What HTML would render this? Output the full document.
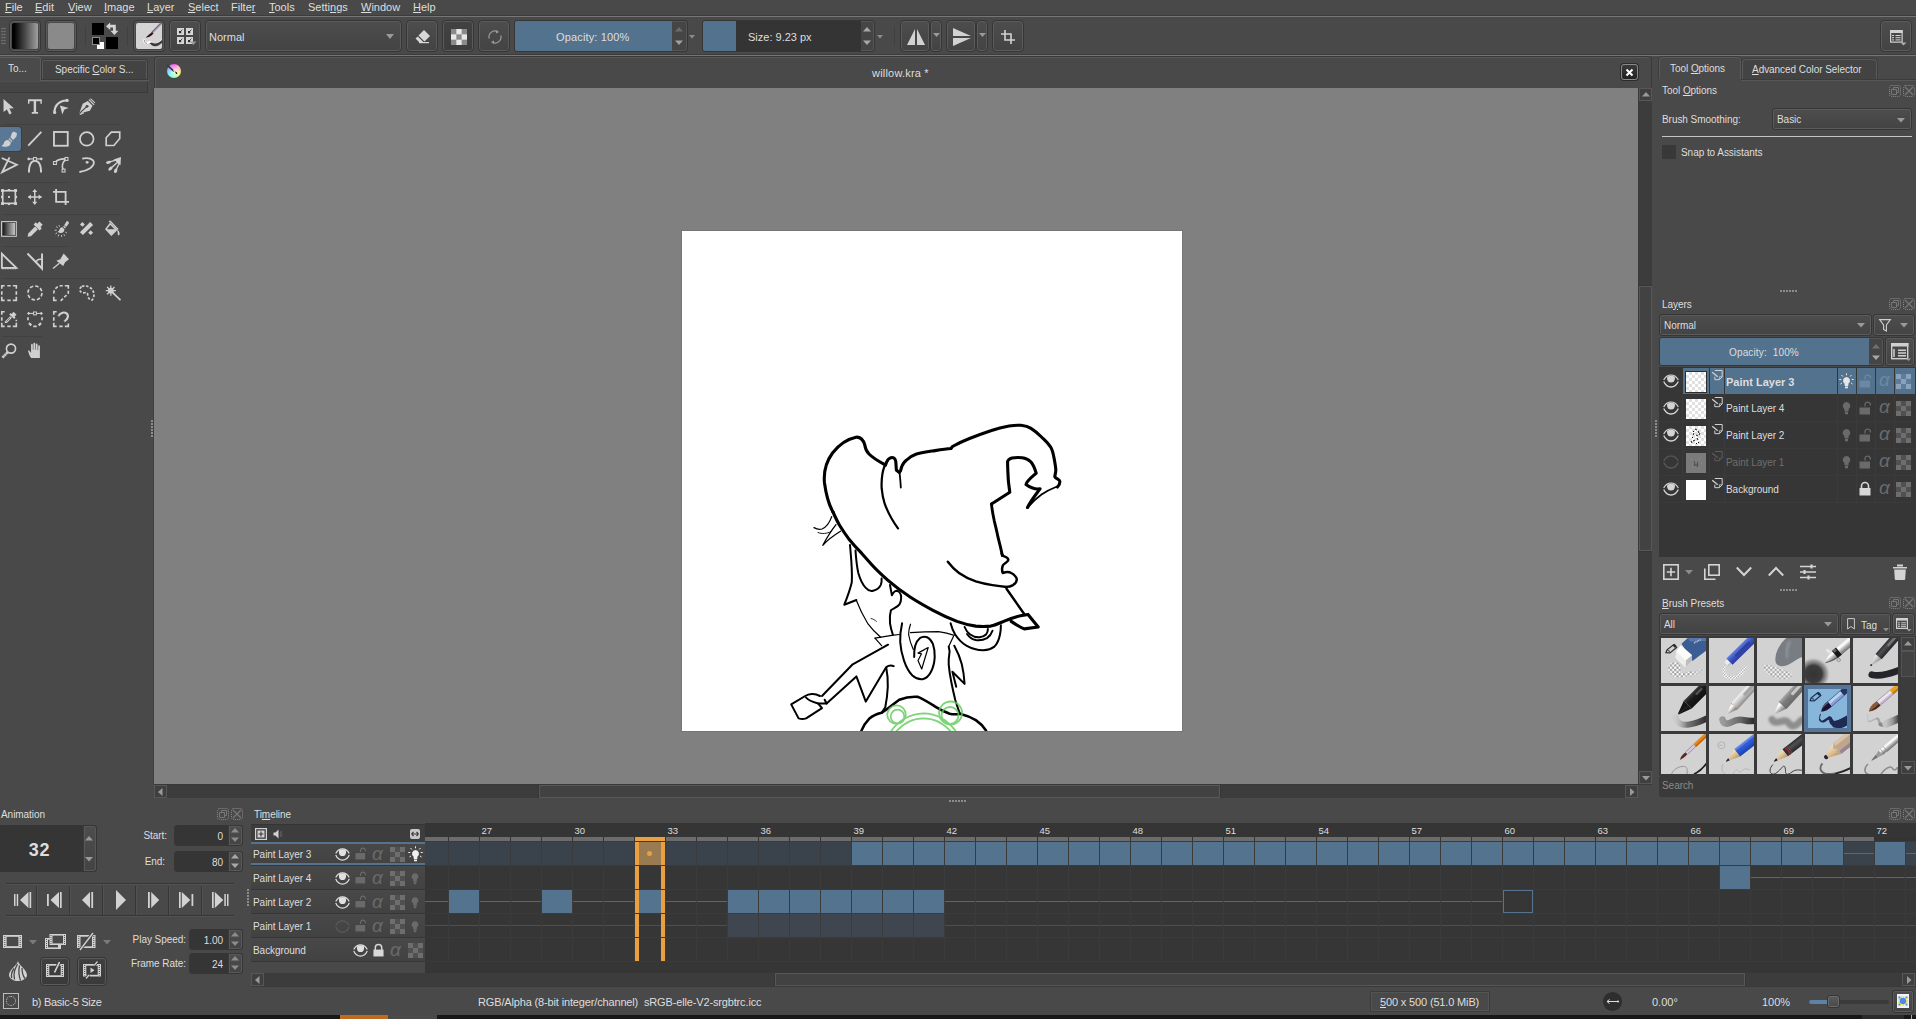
<!DOCTYPE html>
<html lang="en">
<head>
<meta charset="utf-8">
<title>willow.kra - Krita</title>
<style>
*{box-sizing:border-box;margin:0;padding:0}
html,body{width:1916px;height:1019px;overflow:hidden;background:#494949}
body{position:relative;font-family:"Liberation Sans","DejaVu Sans",sans-serif;font-size:11px;color:#dedede;line-height:1}
.a{position:absolute}
.t{position:absolute;white-space:nowrap;line-height:14px;height:14px;color:#dedede}
.btn{position:absolute;border:1px solid #363636;border-radius:4px;background:linear-gradient(#4d4d4d,#434343);box-shadow:inset 0 0 0 1px #5b5b5b}
.inp{position:absolute;border:1px solid #363636;border-radius:3px;background:#353535}
.d{font-size:10px;letter-spacing:-0.050px;margin-top:-0.500px}
.hl{background:#53728e}
.trough{position:absolute;background:#3b3b3b}
.sbtn{position:absolute;border:1px solid #575757;background:#3f3f3f}
svg{position:absolute;overflow:visible}
u{text-decoration:underline;text-underline-offset:1px}
</style>
</head>
<body>
<!-- MENU BAR -->
<div class="a" id="menubar" style="left:0;top:0;width:1916px;height:16px;background:#494949"></div>
<div class="t" style="left:5px;top:0"><u>F</u>ile</div>
<div class="t" style="left:35px;top:0"><u>E</u>dit</div>
<div class="t" style="left:68px;top:0"><u>V</u>iew</div>
<div class="t" style="left:104px;top:0"><u>I</u>mage</div>
<div class="t" style="left:147px;top:0"><u>L</u>ayer</div>
<div class="t" style="left:188px;top:0"><u>S</u>elect</div>
<div class="t" style="left:231px;top:0">Filte<u>r</u></div>
<div class="t" style="left:269px;top:0"><u>T</u>ools</div>
<div class="t" style="left:308px;top:0">Setti<u>n</u>gs</div>
<div class="t" style="left:361px;top:0"><u>W</u>indow</div>
<div class="t" style="left:413px;top:0"><u>H</u>elp</div>
<div class="a" style="left:0;top:15px;width:1916px;height:1px;background:#3c3c3c"></div>
<div class="a" style="left:0;top:16px;width:1916px;height:1px;background:#767676"></div>
<!-- TOOLBAR -->
<div class="a" style="left:0;top:54px;width:1916px;height:1px;background:#3c3c3c"></div>
<div class="a" style="left:0;top:55px;width:1916px;height:1px;background:#767676"></div>
<!-- grip -->
<div class="a" style="left:1px;top:27px;width:5px;height:18px;background-image:radial-gradient(circle,#6a6a6a 0.9px,transparent 1.1px);background-size:2.5px 3px"></div>
<div class="btn" style="left:9px;top:20px;width:32px;height:32px"><div class="a" style="left:2px;top:2px;width:26px;height:26px;border-radius:2px;background:linear-gradient(90deg,#000 8%,#a0a0a0 100%)"></div></div>
<div class="btn" style="left:45px;top:20px;width:32px;height:32px"><div class="a" style="left:2px;top:2px;width:26px;height:26px;border-radius:2px;background:#8a8a8a"></div></div>
<div class="a" style="left:85px;top:26px;width:1px;height:20px;background:#404040"></div>
<!-- fg/bg colors -->
<div class="a" style="left:106px;top:37px;width:12px;height:12px;background:#000"></div>
<div class="a" style="left:92px;top:23px;width:12px;height:12px;background:#000"></div>
<div class="a" style="left:97px;top:42px;width:7px;height:7px;background:#fff"></div>
<div class="a" style="left:92px;top:37px;width:8px;height:8px;background:#000;border:1px solid #8a8a8a"></div>
<svg style="left:106px;top:22px" width="13" height="14" viewBox="0 0 13 14"><path d="M0 4.200L4.200 0.500V2.800H9.800V8.800H12.400L8.400 13L4.400 8.800H7V5.600H4.200V7.900Z" fill="#d4d4d4"/></svg>
<div class="a" style="left:127px;top:26px;width:1px;height:20px;background:#404040"></div>
<!-- brush preset btn -->
<div class="btn" style="left:133px;top:20px;width:32px;height:32px"><div class="a" style="left:2px;top:2px;width:26px;height:26px;border-radius:2px;background:#d4d4d4"></div>
<svg style="left:2px;top:2px;overflow:hidden" width="26" height="26" viewBox="0 0 26 26"><path d="M25 0.500L15.800 10" stroke="#9a8aa6" stroke-width="1.800"/><path d="M24.400 0.200L15.400 9.600" stroke="#5a5058" stroke-width="0.700"/><path d="M16.300 9.300C14 10.500 12 12.500 9.700 14.600C12.500 14.800 15 13.500 17.500 10.600Z" fill="#3a1010"/><path d="M8.500 16.500C8 19 9 20.500 11 20S13.500 18.300 15 19.500S17.500 22 20.500 21.500S24.500 19.500 26.500 17" fill="none" stroke="#fff" stroke-width="2.200"/><path d="M13.500 20.500C15 21 15.500 23 18.500 23.300S23.500 22 27 19.300V16C24 19 21.500 20.500 19 20.500S16 18.500 13.500 20.500Z" fill="#3c3c3c"/><path d="M8.600 17C8.300 19.500 9.500 20.800 11 20.300" fill="none" stroke="#666" stroke-width="0.700"/></svg></div>
<div class="btn" style="left:169px;top:20px;width:32px;height:32px">
<svg style="left:7px;top:7px" width="20" height="18" viewBox="0 0 20 18"><g fill="#d6d6d6"><rect x="0" y="0" width="7" height="7"/><rect x="9" y="0" width="7" height="7"/><rect x="0" y="9" width="7" height="7"/><rect x="9" y="9" width="7" height="7"/></g><path d="M13 13.500h6.500l-3.200 3.500z" fill="#9a9a9a"/><g fill="#2c2c2c"><rect x="2" y="3" width="2.200" height="2.200"/><rect x="11" y="3" width="2.200" height="2.200"/><rect x="2" y="12" width="2.200" height="2.200"/><rect x="11" y="12" width="2.200" height="2.200"/></g><g stroke="#2c2c2c" stroke-width="0.800"><path d="M3.500 3.500l2-2M12.500 3.500l2-2M3.500 12.500l2-2M12.500 12.500l2-2"/></g></svg></div>
<!-- blend combo -->
<div class="btn" style="left:205px;top:20px;width:197px;height:32px"></div>
<div class="t" style="left:209px;top:30px">Normal</div>
<svg style="left:386px;top:34px" width="8" height="5"><path d="M0 0h8l-4 5z" fill="#9a9a9a"/></svg>
<!-- eraser -->
<div class="btn" style="left:406px;top:20px;width:32px;height:32px">
<svg style="left:8px;top:9px" width="16" height="14" viewBox="0 0 16 14"><path d="M9 0l6 6-5.5 5.5-6-6z" fill="#d8d8d8"/><path d="M2.8 6.4l6 6H4.5L0.5 8.6z" fill="#d8d8d8"/><path d="M4 12.6h10" stroke="#d8d8d8" stroke-width="1.2"/></svg></div>
<div class="btn" style="left:442px;top:20px;width:32px;height:32px;background:linear-gradient(#424242,#3c3c3c)">
<svg style="left:8px;top:8px" width="16" height="16" viewBox="0 0 15 15"><rect width="15" height="15" fill="#8a8a8a"/><g fill="#e8e8e8"><rect x="5" y="0" width="5" height="5"/><rect x="0" y="5" width="5" height="5"/><rect x="10" y="5" width="5" height="5"/><rect x="5" y="10" width="5" height="5"/></g></svg></div>
<div class="btn" style="left:478px;top:20px;width:32px;height:32px">
<svg style="left:9px;top:9px" width="14" height="14" viewBox="0 0 14 14"><path d="M1.2 8.5A6 6 0 0 1 9.5 1.5M12.8 5.5A6 6 0 0 1 4.5 12.5" stroke="#9c9c9c" stroke-width="1.2" fill="none"/><path d="M8 0l3 2-3 1.500zM6 14l-3-2 3-1.500z" fill="#9c9c9c"/></svg></div>
<!-- opacity slider -->
<div class="a" style="left:514px;top:20px;width:174px;height:32px;border:1px solid #363636;border-radius:3px;background:#454545;box-shadow:inset 0 0 0 1px #565656"></div>
<div class="a hl" style="left:515px;top:21px;width:157px;height:30px;border-radius:2px 0 0 2px"></div>
<div class="t" style="left:556px;top:30px;letter-spacing:0.150px">Opacity: 100%</div>
<svg style="left:675px;top:27px" width="8" height="18"><path d="M0 4.500h8l-4-4.500z" fill="#6c6c6c"/><path d="M0 13.500h8l-4 4.500z" fill="#a0a0a0"/></svg>
<svg style="left:689px;top:35px" width="6" height="4"><path d="M0 0h6l-3 3.500z" fill="#8c8c8c"/></svg>
<!-- size slider -->
<div class="a" style="left:702px;top:20px;width:173px;height:32px;border:1px solid #363636;border-radius:3px;background:#454545;box-shadow:inset 0 0 0 1px #565656"></div>
<div class="a" style="left:703px;top:21px;width:158px;height:30px;background:#343434;border-radius:2px 0 0 2px"></div>
<div class="a hl" style="left:703px;top:21px;width:33px;height:30px;border-radius:2px 0 0 2px"></div>
<div class="t" style="left:748px;top:30px">Size: 9.23 px</div>
<svg style="left:863px;top:27px" width="8" height="18"><path d="M0 4.500h8l-4-4.500zM0 13.500h8l-4 4.500z" fill="#a8a8a8"/></svg>
<svg style="left:877px;top:35px" width="6" height="4"><path d="M0 0h6l-3 3.500z" fill="#8c8c8c"/></svg>
<div class="a" style="left:894px;top:26px;width:1px;height:20px;background:#404040"></div>
<!-- mirror buttons -->
<div class="btn" style="left:900px;top:20px;width:30px;height:32px">
<svg style="left:6px;top:8px" width="18" height="16" viewBox="0 0 18 16"><path d="M8 0v16H0zM10 0v16h8z" fill="#d2d2d2"/></svg></div>
<div class="btn" style="left:930px;top:20px;width:12px;height:32px"><svg style="left:2px;top:12px" width="7" height="5"><path d="M0 0h7l-3.500 4z" fill="#9a9a9a"/></svg></div>
<div class="btn" style="left:946px;top:20px;width:30px;height:32px">
<svg style="left:6px;top:7px" width="18" height="18" viewBox="0 0 18 18"><path d="M0 0l18 8H0zM0 10h18L0 18z" fill="#d2d2d2"/></svg></div>
<div class="btn" style="left:976px;top:20px;width:12px;height:32px"><svg style="left:2px;top:12px" width="7" height="5"><path d="M0 0h7l-3.500 4z" fill="#9a9a9a"/></svg></div>
<div class="btn" style="left:992px;top:20px;width:32px;height:32px">
<svg style="left:8px;top:9px" width="14" height="14" viewBox="0 0 14 14"><path d="M0 4h10v10M4 0v10h10" stroke="#d2d2d2" stroke-width="1.600" fill="none"/></svg></div>
<!-- workspace btn -->
<div class="btn" style="left:1880px;top:20px;width:32px;height:32px">
<svg style="left:9px;top:9px" width="18" height="16" viewBox="0 0 18 16"><rect x="0.600" y="0.600" width="11.500" height="11.500" fill="none" stroke="#d2d2d2" stroke-width="1.200"/><path d="M0 0h12.500v3H0z" fill="#d2d2d2"/><path d="M2 5.500h2M5.500 5.500h5M2 7.700h2M5.500 7.700h5M2 9.900h2M5.500 9.900h5" stroke="#d2d2d2" stroke-width="1"/><path d="M10.500 12.500h6l-3 3z" fill="#b0b0b0"/></svg></div>
<!-- LEFT TABS -->
<div class="a" style="left:-1px;top:57px;width:42px;height:24px;border:1px solid #5c5c5c;border-bottom:none;border-radius:0 3px 0 0;background:#4a4a4a"></div>
<div class="t d" style="left:8px;top:62px">To...</div>
<div class="a" style="left:41px;top:59px;width:107px;height:21px;border:1px solid #3a3a3a;border-radius:3px 3px 0 0;background:#434343;box-shadow:inset 0 1px 0 0 #585858,inset 1px 0 0 0 #585858,inset -1px 0 0 0 #585858"></div>
<div class="t d" style="left:55px;top:63px">Specific <u>C</u>olor S...</div>
<div class="a" style="left:41px;top:80px;width:108px;height:1px;background:#5a5a5a"></div>
<div class="a" style="left:0;top:81px;width:148px;height:12px;border-right:1px solid #3a3a3a;border-bottom:1px solid #3a3a3a;border-top:1px solid #4e4e4e;background:#454545"></div>
<!-- CANVAS TAB BAR -->
<div class="a" style="left:154px;top:56px;width:1498px;height:32px;border:1px solid #393939;border-bottom:none;border-radius:4px 4px 0 0;background:#494949;box-shadow:inset 1px 1px 0 0 #585858"></div>
<div class="a" style="left:167px;top:64px;width:14px;height:14px;border-radius:50%;background:radial-gradient(circle at 50% 55%,rgba(255,255,255,0.850) 0,rgba(255,255,255,0.350) 45%,rgba(255,255,255,0) 75%),conic-gradient(from 0deg,#ff50e0,#ff9ad0 12%,#fff060 30%,#a0ff90 45%,#40fff0 62%,#70b0ff 78%,#c080ff 90%,#ff50e0)"></div>
<svg style="left:166px;top:63px" width="16" height="16" viewBox="0 0 16 16"><path d="M1.500 2.500L7.500 7.800" stroke="#3a3a3a" stroke-width="1.700" stroke-linecap="round"/><path d="M7.500 7.200L9.600 9" stroke="#d8d8d8" stroke-width="1.500"/><path d="M9.300 8.500C10.500 8.500 11.500 9.500 11.200 11.200C10 11 9 10 9.300 8.500Z" fill="#222"/></svg>
<div class="t" style="left:872px;top:66px;letter-spacing:0.200px">willow.kra *</div>
<div class="a" style="left:1621px;top:64px;width:17px;height:16px;border:1px solid #8a8a8a;border-radius:3px;background:linear-gradient(#3a3a3a,#222);box-shadow:0 0 0 1px #2c2c2c"></div>
<svg style="left:1625px;top:68px" width="9" height="9" viewBox="0 0 9 9"><path d="M1.500 1.500l6 6M7.500 1.500l-6 6" stroke="#fff" stroke-width="2"/></svg>
<!-- CANVAS AREA -->
<div class="a" style="left:154px;top:88px;width:1484px;height:696px;background:#808080"></div>
<div class="a" style="left:681px;top:230px;width:502px;height:502px;background:#767676"></div>
<div class="a" style="left:682px;top:231px;width:500px;height:500px;background:#fff;overflow:hidden">
<svg style="left:-682px;top:-231px" width="1916" height="1019" viewBox="0 0 1916 1019" fill="none" stroke="#000" stroke-linecap="round" stroke-linejoin="round">
<g stroke-width="3.100">
<path d="M833 512C829 505 826 494 824.500 483C823.500 473 826 462 832.500 453C838 446 847 439 856 437.200C860 436.800 863 439 864.800 445C865.500 450 867 452 869 454C874 459 880 462 885.500 465"/>
<path d="M885.500 465C886.500 462 888 459 889.500 458.300C893 456.500 895 458 895.700 461C896.200 465 896 468 896.500 470.300L899.400 472.400"/>
<path d="M899.500 472C900 477 900.600 482 900.800 487.500" stroke-width="1.800"/>
<path d="M900.500 471C901.500 466 903 463 906 460.500C909 457.500 912 455.500 916.500 454C922 452.500 927 451.800 932.500 451C939 450 945 449 951 448.500L952.500 446.500C958 443.500 963 441 969.500 438.500C977 435.500 984 433 991.500 430.500C997 428.500 1003 427 1009 426C1013 425.400 1017 425 1021 425.300C1025 425.800 1028 426.500 1031 428.300C1035 430.800 1038 433.500 1041.500 437C1045 440.500 1048 443 1050.500 446.800C1052.500 450 1053.300 454 1054 457.800C1054.800 462 1055.500 466 1055.800 469.500C1056 472 1055 474 1054.800 476.800C1056 479 1059.500 479 1059.800 481.300C1060 483.500 1058.500 486 1057.500 487"/>
<path d="M1057 486.500C1052 488.500 1046 491.500 1041.500 494.500C1036 498.500 1031.500 503 1027.500 507.600" stroke-width="1.800"/>
<path d="M1027.500 507.500C1031 500.500 1036 494.500 1040 488.800C1035 489.500 1030 487.500 1026 484.500C1026.500 481 1032 477 1036.200 473.200C1035 469 1033.500 465 1031 462C1028.500 459.500 1025.500 458 1022.300 457.700C1019 457.400 1015 457.400 1012 458C1009.500 458.800 1008 459.800 1007.600 461.500C1007.500 467 1008 473 1008.300 480C1008.600 484 1009.300 488 1009.800 492.300L991.500 504"/>
<path d="M991.500 504C992 510 993 515 994.300 521C995.500 526 996.800 531 998 537.200C999.500 543 1001 549 1002.400 555.600" stroke-width="2.900"/>
<path d="M888 460C885 464 883.200 469 882.400 474C881.600 479 881.400 484 881.700 488.700C882.200 494 883 498.500 884.600 503.300C886.200 508 888.500 513 891.300 518C893.300 521.500 895.500 525 898 528.400" stroke-width="2.200"/>
<path d="M833 512C835 516.500 837 521 839.700 525.500C842.500 530 845.500 534.500 848.600 538.700C852.500 543.500 857 548.500 861.800 553.400C865 557 868.500 561 872 565C877 570.500 882.500 575.500 888 580.400C895 586.500 902.500 592 910.500 597.200C917.500 601.700 925 606 933 610.300C940.500 614.300 948.500 618 957 621.400C963 623.600 969.500 625.300 975.800 626.100C981 626.600 986 626.500 990.700 626.100C995 625.200 999.500 623.200 1003.700 621.400C1009 619.200 1015 617 1020.500 615.800L1028 614.400L1038.200 627L1024.200 628.900C1019.500 627 1015 624 1011.200 621.400"/>
</g>
<g stroke-width="2.400">
<path d="M1001.500 553.500C1002.400 555 1003 555.800 1003.700 556.200C1006 557 1008.200 558.200 1008.400 559.900C1008.200 562 1004 563 1002.800 565.500C1001.800 568 1001.800 571 1002.800 573C1005.500 572 1009 571.600 1011.200 573C1014 574.500 1016.500 577 1016.800 579.500C1016.800 581.500 1015 583.800 1013 585.100C1011 586.300 1008.500 586.900 1006.500 586.900"/>
<path d="M1006.500 588.800L1024.200 614"/>
<path d="M947.800 561.800C951 566 954.500 569.800 959 573C964 576.500 969.500 579.300 975.800 581.400C981 583 986.500 584.300 992.500 585.100C997 585.800 1002 586.500 1006.500 587"/>
</g>
<g stroke-width="1.300">
<path d="M814 527.600C817 529.300 820 529.600 822 529C826.500 527 830 521.500 831.700 516.600"/>
<path d="M836 524.700C831 531 826.500 538.500 822.800 545.300C828 539.500 834.500 535 840.500 531.300"/>
<path d="M818 532.500C822 534.200 827 533.800 831 531.500" stroke-width="0.900"/>
</g>
<g stroke-width="2">
<path d="M850 545C851 557 852.500 570 851.800 582.300C850 590 847 598 844.300 604.700L856.400 600"/>
<path d="M855.500 550.600C856 558 856.800 566 858.300 573C860 579 862.500 584.500 865.800 587.900C868 590.500 871 591.200 873.200 590.700C876.500 590 879.500 587.500 880.700 585.100C881.500 583 881.800 580.500 881.600 578.600"/>
<path d="M890 585C890.600 588.500 891.300 592 891.900 595.300C893 593 895 590.800 896.500 590.700C899 591 901 594 901.200 597.200C901.200 600 900.500 602.800 899.300 604.700C897 607.500 893 608.500 890.900 610.300C889.700 614.500 889.600 619 890 623.300C890.600 627 891.600 631 892.800 634.500"/>
<path d="M902.100 623.300C900.800 629 900 635.500 900.200 641.900C900.600 648.500 902 654.800 904 660.600C906 666.500 908.800 671.800 912.400 675.500C915.500 678.300 919 679.600 922.600 679.200C926 678.500 929 675.800 931 671.800C933.200 667.500 934.500 662.300 934.700 656.900C934.800 652.500 934.300 647.800 932.900 643.800C931.500 640.800 929.700 638.400 927.300 637.300C924.800 636.500 922 636.800 919.800 638.200C917.500 640 916 642.700 915.200 645.700C914.300 649.200 914 653 914.200 656.900"/>
<path d="M948.700 646.600L949.600 651.300C949 655.500 948.500 660 948.700 664.300C949.200 670.500 950.300 677 951.500 683C952.600 688.500 953.800 694 955.200 699.700C956.600 704.500 958.300 709.300 959.900 713.700"/>
<path d="M950.600 623.300C951.600 627.300 953 631 955.200 634.500C958 639 962 643 966.400 645.700C971.500 648.600 977.500 650.300 983.200 650.300C987.500 650 991.500 648.800 994.400 646.600C997 644 999 639.500 1000 634.500C1000.600 631.500 1000.900 628.300 1000.900 625.200"/>
<path d="M964.600 627C965.800 630 967.800 632.800 970.200 634.500C973 636.500 976.300 637.500 979.500 637.300C982 637 984.500 636 986 634.500C987.300 633 987.900 631 987.900 628.900"/>
<path d="M967 634C969.500 637.500 972.500 639.500 975.800 640.100C979.500 640.600 983.500 640 987 638.200C989.500 636.500 991.500 633.800 992.500 630.800"/>
<path d="M888.100 644.700L852.700 664.300L822 696"/>
<path d="M826.600 703.500L856.400 676.400L865.800 701.600L886.300 667.100C888.500 665.500 891 665 893.700 666.200"/>
<path d="M886.300 668C887.500 674 888 680.500 887.800 686.700C887.500 693.500 886.600 700.500 885.300 707.200L881.600 712.800"/>
<path d="M820 696C817 694.500 814.500 693.800 811.700 694.100C809.500 694.300 807 695 805.200 696L791.200 704.400L798.600 718.400C801 719.200 803.800 719.200 806.100 718.400L822 708.100L818.200 703.500"/>
<path d="M806 697.500C808 700 812 701.800 818.200 703.500L826.600 703.500L824.700 699.700"/>
<path d="M954.300 645.700C957.500 651.500 960.200 658 961.800 664.300C963.300 670.500 964.200 677.500 964.600 683.900L952.400 671.800L956.200 686.700"/>
</g>
<g stroke-width="2.600">
<path d="M861.100 731.400C863 726.500 866 722 869.500 718.400C873 715.500 877.500 713.800 881.600 712.800C888 709 893.500 704 899.300 699.700C905 697.500 912 696.500 918 696.900C924 699.500 929.500 703 934.700 706.300C939.500 709.200 944.500 711.800 949.600 713.700C953 714.500 956.500 714.500 959.900 713.700C965.500 715 971 717.300 975.800 720.200C980 723 983.500 726.800 986 730.500"/>
</g>
<g stroke-width="1.200">
<path d="M856.400 600.500C859.500 608.500 863.500 616.500 867.600 623.300C871.500 628.500 876 633.300 880.700 637.300"/>
<path d="M875 638.200L891.900 635.400L899.300 634.500"/>
<path d="M875 638.200L881.600 645.700"/>
<path d="M910.500 632.600C920 632 929 631.700 938.500 631.700C944 632.500 949.500 633.800 954.300 635.400"/>
<path d="M910.500 624.200C909.300 627.500 908.600 631 908.600 634.500C909.500 639.800 911.200 645 913.300 649.400"/>
<path d="M918 660.600L921.700 669L928.200 647.500C925 649 921.500 651.500 918 653.100L921.500 653.800L918 660.600"/>
<path d="M953.400 636.400L948.700 646.600"/>
<path d="M871 618.500C873 618.800 875 620 876.500 621.500" stroke-width="0.800"/>
</g>
<g stroke="#5fca58" stroke-width="1.800" opacity="0.800">
<circle cx="896.500" cy="714.600" r="9.300"/>
<circle cx="897.500" cy="716.500" r="6.800"/>
<circle cx="950.600" cy="713" r="11.500"/>
<circle cx="950" cy="715.500" r="8.500"/>
<path d="M890 733C897 721 910 713.500 923.500 713.300C937 713.500 949 721 957 733"/>
<path d="M895 733C902 724 912 718.500 923.500 718.300C935 718.500 945 724 952 733"/>
</g>
</svg>
</div>
<!-- canvas scrollbars -->
<div class="trough" style="left:1638px;top:88px;width:14px;height:696px;background:#3c3c3c"></div>
<div class="sbtn" style="left:1639px;top:88px;width:13px;height:13px"><svg style="left:2px;top:3px" width="8" height="5"><path d="M0 4.500h8l-4-4.500z" fill="#9a9a9a"/></svg></div>
<div class="a" style="left:1639px;top:286px;width:13px;height:265px;border:1px solid #585858;background:#424242;box-shadow:0 1px 0 0 #363636,0 -1px 0 0 #363636"></div>
<div class="sbtn" style="left:1639px;top:771px;width:13px;height:13px"><svg style="left:2px;top:4px" width="8" height="5"><path d="M0 0h8l-4 4.500z" fill="#9a9a9a"/></svg></div>
<div class="trough" style="left:154px;top:785px;width:1484px;height:13px;background:#3c3c3c"></div>
<div class="sbtn" style="left:154px;top:785px;width:13px;height:13px"><svg style="left:3px;top:2px" width="5" height="8"><path d="M4.500 0v8l-4.500-4z" fill="#9a9a9a"/></svg></div>
<div class="a" style="left:539px;top:785px;width:681px;height:13px;border:1px solid #585858;background:#424242;box-shadow:-1px 0 0 0 #363636,1px 0 0 0 #363636"></div>
<div class="sbtn" style="left:1625px;top:785px;width:13px;height:13px"><svg style="left:4px;top:2px" width="5" height="8"><path d="M0 0v8l4.500-4z" fill="#9a9a9a"/></svg></div>
<div class="a" style="left:154px;top:784px;width:1498px;height:1px;background:#393939"></div>
<div class="a" style="left:1638px;top:88px;width:1px;height:696px;background:#393939"></div>
<!-- splitter dots -->
<div class="a" style="left:151px;top:420px;width:2px;height:17px;background-image:linear-gradient(#8c8c8c 2px,transparent 2px);background-size:2px 3px"></div>
<div class="a" style="left:1655px;top:420px;width:2px;height:17px;background-image:linear-gradient(#8c8c8c 2px,transparent 2px);background-size:2px 3px"></div>
<div class="a" style="left:949px;top:800px;width:17px;height:2px;background-image:linear-gradient(90deg,#8c8c8c 2px,transparent 2px);background-size:3px 2px"></div>
<div class="a" style="left:153px;top:88px;width:1px;height:696px;background:#404040"></div>
<!-- TOOLBOX -->
<div class="a" style="left:0;top:127px;width:21px;height:24px;background:#5a7896;border-radius:0 3px 3px 0;box-shadow:0 0 0 1px #3e3e3e"></div>
<div class="a" style="left:2px;top:124px;width:118px;height:1px;background:#414141"></div>
<div class="a" style="left:2px;top:182px;width:66px;height:1px;background:#414141"></div>
<div class="a" style="left:2px;top:214px;width:118px;height:1px;background:#414141"></div>
<div class="a" style="left:2px;top:246px;width:66px;height:1px;background:#414141"></div>
<div class="a" style="left:2px;top:278px;width:118px;height:1px;background:#414141"></div>
<div class="a" style="left:2px;top:336px;width:40px;height:1px;background:#414141"></div>
<svg style="left:1px;top:99px" width="16" height="16" viewBox="0 0 16.500 16.500"><path d="M2.600 0V13.400L6.100 10.700L8.600 16L11 14.800L8.600 9.900L13.200 9.500Z" fill="#d0d0d0"/></svg>
<svg style="left:27px;top:99px" width="16" height="16" viewBox="0 0 16.500 16.500"><path d="M1 0.300h14.300v4.700h-1.500v-2.800h-4.400v11.300h2v1.800h-6.500v-1.800h2v-11.300h-4.400v2.800h-1.500z" fill="#d0d0d0"/></svg>
<svg style="left:53px;top:99px" width="16" height="16" viewBox="0 0 16.500 16.500"><path d="M1.500 13.500C1.500 7 6 1.800 14 1.500" stroke="#d0d0d0" stroke-width="2.100" fill="none"/><circle cx="1.700" cy="13.800" r="1.700" fill="#d0d0d0"/><circle cx="14.500" cy="1.500" r="1.700" fill="#d0d0d0"/><path d="M7.200 6.600L16.200 9.300L11.800 10.800L9.600 16Z" fill="#d0d0d0"/></svg>
<svg style="left:79px;top:99px" width="16" height="16" viewBox="0 0 16.500 16.500"><path d="M0.200 15L3.800 4.800L9 2L14 7L11.200 12.200Z" fill="#d0d0d0"/><path d="M0.200 15L7.800 8" stroke="#494949" stroke-width="1.100"/><circle cx="8.300" cy="7.600" r="1.500" fill="#494949"/><path d="M0.800 16L5 14" stroke="#d0d0d0" stroke-width="1.300"/><path d="M10.200 0.700L15.600 6.100" stroke="#d0d0d0" stroke-width="1.300"/><path d="M11.800 -0.500L16.400 4.100" stroke="#d0d0d0" stroke-width="1.100"/></svg>
<svg style="left:1px;top:131px" width="16" height="16" viewBox="0 0 16.500 16.500"><path d="M13.200 0.400L16.500 2.400L15.900 5.800L12.600 9.200L9.800 6.400L11.200 2Z" fill="#d0d0d0"/><path d="M9 7.300L11.900 10.200L10.600 11.500L7.700 8.600Z" fill="#d0d0d0"/><path d="M9.300 7.800L11.500 10M8.500 8.600L10.700 10.800" stroke="#5a7896" stroke-width="0.500"/><path d="M7.300 9.300L10 11.900C10.500 14.800 7.500 16.300 4.300 16.300C2.800 16.300 1.300 15.800 0.300 15.100C2.300 14.500 2.600 13.200 3.100 12C3.800 10.200 5.600 8.900 7.300 9.300Z" fill="#d0d0d0"/></svg>
<svg style="left:27px;top:131px" width="16" height="16" viewBox="0 0 16.500 16.500"><path d="M1.300 15.200L14.800 0.800" stroke="#d0d0d0" stroke-width="1.900"/></svg>
<svg style="left:53px;top:131px" width="16" height="16" viewBox="0 0 16.500 16.500"><rect x="1" y="1" width="14.200" height="14.200" fill="none" stroke="#d0d0d0" stroke-width="1.900"/></svg>
<svg style="left:79px;top:131px" width="16" height="16" viewBox="0 0 16.500 16.500"><circle cx="8" cy="8.200" r="7" fill="none" stroke="#d0d0d0" stroke-width="1.800"/></svg>
<svg style="left:105px;top:131px" width="16" height="16" viewBox="0 0 16.500 16.500"><path d="M6.500 1.200H15.200V7.800L9.200 15H1.200V7Z" fill="none" stroke="#d0d0d0" stroke-width="1.700"/></svg>
<svg style="left:1px;top:157px" width="16" height="16" viewBox="0 0 16.500 16.500"><path d="M0.800 1L16.300 8L1.200 15.600L8.800 0.400" fill="none" stroke="#d0d0d0" stroke-width="1.900"/></svg>
<svg style="left:27px;top:157px" width="16" height="16" viewBox="0 0 16.500 16.500"><path d="M2 16C2 9 4 4 8.200 4S14.500 9 14.500 16" fill="none" stroke="#d0d0d0" stroke-width="2"/><path d="M1.500 2H15" stroke="#d0d0d0" stroke-width="1.200"/><path d="M0 2L1.700 0.300L3.400 2L1.700 3.700ZM13 2L14.700 0.300L16.400 2L14.700 3.700Z" fill="#d0d0d0"/><rect x="6.700" y="0.500" width="3" height="3" fill="#494949" stroke="#d0d0d0" stroke-width="1"/></svg>
<svg style="left:53px;top:157px" width="16" height="16" viewBox="0 0 16.500 16.500"><path d="M2.500 5.500C4.500 2.800 8 1.800 13 2M13.500 2.500C9.500 5 9 9.500 10.500 13" fill="none" stroke="#d0d0d0" stroke-width="1.800"/><rect x="0.500" y="4.700" width="3" height="3" fill="#494949" stroke="#d0d0d0" stroke-width="1.100"/><rect x="12.400" y="0.500" width="3" height="3" fill="#494949" stroke="#d0d0d0" stroke-width="1.100"/><rect x="9.400" y="12.500" width="3" height="3" fill="#494949" stroke="#d0d0d0" stroke-width="1.100"/></svg>
<svg style="left:79px;top:157px" width="16" height="16" viewBox="0 0 16.500 16.500"><path d="M3.300 1.600C8 0.800 12.500 1.500 14.500 3.500C16.500 5.800 15 9 11.500 11.500C8.500 13.500 4.500 14.800 0.400 15.500" fill="none" stroke="#d0d0d0" stroke-width="1.900"/><circle cx="8.400" cy="5.500" r="1.500" fill="#d0d0d0"/></svg>
<svg style="left:105px;top:157px" width="16" height="16" viewBox="0 0 16.500 16.500"><path d="M14 2.500L3 5.500M13.500 5L5 12.500M14.800 6.500L10.800 14.500" stroke="#d0d0d0" stroke-width="1.400" fill="none"/><path d="M16.500 0L16 8.500L13 6.400L10.800 3.800L8.800 2.500Z" fill="#d0d0d0"/><ellipse cx="3.600" cy="5.500" rx="2.600" ry="1.500" fill="#d0d0d0" transform="rotate(-12 3.600 5.500)"/><ellipse cx="5.600" cy="12" rx="2.400" ry="1.600" fill="#d0d0d0" transform="rotate(-40 5.600 12)"/><ellipse cx="11" cy="14.200" rx="2.400" ry="1.600" fill="#d0d0d0" transform="rotate(-65 11 14.200)"/></svg>
<svg style="left:1px;top:189px" width="16" height="16" viewBox="0 0 16.500 16.500"><rect x="1.800" y="1.800" width="13" height="13" fill="none" stroke="#d0d0d0" stroke-width="1.700"/><g fill="#d0d0d0"><rect x="0" y="0" width="3.200" height="3.200" rx="1"/><rect x="13.400" y="0" width="3.200" height="3.200" rx="1"/><rect x="0" y="13.400" width="3.200" height="3.200" rx="1"/><rect x="13.400" y="13.400" width="3.200" height="3.200" rx="1"/><rect x="7" y="0" width="2.400" height="2" /><rect x="7" y="14.600" width="2.400" height="2"/><rect x="0" y="7" width="2" height="2.400"/><rect x="14.600" y="7" width="2" height="2.400"/><rect x="7.200" y="7.200" width="2" height="2"/></g></svg>
<svg style="left:27px;top:189px" width="16" height="16" viewBox="0 0 16.500 16.500"><path d="M8 1.500V15M1.500 8.200H15" stroke="#d0d0d0" stroke-width="1.500"/><path d="M8 0L10.600 3.200H5.400ZM8 16.400L10.600 13.200H5.400ZM0.800 8.200L4 5.600V10.800ZM15.200 8.200L12 5.600V10.800Z" fill="#d0d0d0"/></svg>
<svg style="left:53px;top:189px" width="16" height="16" viewBox="0 0 16.500 16.500"><path d="M0 3H13V16.500M3.200 0V13.200H16.500" fill="none" stroke="#d0d0d0" stroke-width="1.900"/></svg>
<svg style="left:1px;top:221px" width="16" height="16" viewBox="0 0 16.500 16.500"><defs><linearGradient id="tg" x1="0" x2="1" y1="0" y2="0"><stop offset="0" stop-color="#1a1a1a"/><stop offset="1" stop-color="#c8c8c8"/></linearGradient></defs><rect x="0.600" y="0.600" width="15.200" height="15.200" fill="#494949" stroke="#d0d0d0" stroke-width="1"/><rect x="2" y="2" width="12.400" height="12.400" fill="url(#tg)"/></svg>
<svg style="left:27px;top:221px" width="16" height="16" viewBox="0 0 16.500 16.500"><path d="M0.600 16.200L1.300 13L8.300 5.800L11.200 8.700L4 15.700Z" fill="#d0d0d0"/><path d="M6.800 3.500L9 1.300L10.500 2.800L12.800 0.500L16.200 3.800L13.900 6.100L15.200 7.600L13 9.800Z" fill="#d0d0d0"/></svg>
<svg style="left:53px;top:221px" width="16" height="16" viewBox="0 0 16.500 16.500"><path d="M14.200 0C15.800 0 16.800 1.300 16.200 2.800L13.500 6.200L11.500 4.400Z" fill="#d0d0d0"/><path d="M10.800 5.300L12.800 7.300" stroke="#d0d0d0" stroke-width="1.400"/><path d="M9.800 6.500L11.700 8.400C12 10.800 10 12.600 7.500 12.300C6.300 12.100 5.300 11.500 4.800 11C6.300 10.500 6.300 9.400 6.800 8.400C7.300 7.200 8.600 6.200 9.800 6.500Z" fill="#d0d0d0"/><path d="M6 4.300L6.800 5.800M3.300 5.800L4.800 6.900M1.800 9.500H3.800M2.600 13.200L4.300 12.200M5.300 15.800L6 14M9 16.300L8.800 14.500M12.200 15.300L11.200 13.800M14.200 12.200L12.700 11.400" stroke="#d0d0d0" stroke-width="1"/></svg>
<svg style="left:79px;top:221px" width="16" height="16" viewBox="0 0 16.500 16.500"><path d="M11.500 1L14.500 4L4 14.500L1 11.500Z" fill="#d0d0d0"/><path d="M3.500 1L6 3.500L3.500 6L1 3.500ZM12 9.500L14.500 12L12 14.500L9.500 12Z" fill="#d0d0d0"/></svg>
<svg style="left:105px;top:221px" width="16" height="16" viewBox="0 0 16.500 16.500"><path d="M4.300 1.200L5.300 0.200L13.500 8.800" stroke="#d0d0d0" stroke-width="1.300" fill="none"/><path d="M5.300 2.800L11.800 9.300L6.600 14.300L1 8.500Z" fill="none" stroke="#d0d0d0" stroke-width="1.500"/><path d="M1.600 8.500H11.800L6.600 13.800Z" fill="#d0d0d0"/><path d="M12.300 8.800C14.300 9.800 15.300 11.800 15 14.300C14.300 15.100 13.300 14.800 13.100 13.800C13.300 12.300 13 10.800 12.300 8.800Z" fill="#d0d0d0"/></svg>
<svg style="left:1px;top:253px" width="16" height="16" viewBox="0 0 16.500 16.500"><path d="M0.900 0.800V15.300H15.800Z" fill="none" stroke="#d0d0d0" stroke-width="1.900"/><path d="M1 15.600H16.300" stroke="#d0d0d0" stroke-width="2.400" stroke-dasharray="1.800 0.800"/></svg>
<svg style="left:27px;top:253px" width="16" height="16" viewBox="0 0 16.500 16.500"><path d="M0.500 0.500L15.500 16V0.500" fill="none" stroke="#d0d0d0" stroke-width="2"/><path d="M15 6.500C12 6 9.800 7.500 9.300 10" fill="none" stroke="#d0d0d0" stroke-width="1.500"/></svg>
<svg style="left:53px;top:253px" width="16" height="16" viewBox="0 0 16.500 16.500"><path d="M11 0.500L16.500 6.500L12.500 9.500L10.500 13.500L7.500 11L3.500 8L7.500 6.500Z" fill="#d0d0d0"/><path d="M6.500 10.500L0 16" stroke="#d0d0d0" stroke-width="1.300"/></svg>
<svg style="left:1px;top:285px" width="16" height="16" viewBox="0 0 16.500 16.500"><path d="M0.800 3.800V0.800H3.800M12.200 0.800H15.800V3.800M15.800 12.200V15.800H12.200M3.800 15.800H0.800V12.200M6.500 0.800H10M6.500 15.800H10M0.800 6.500V10M15.800 6.500V10" fill="none" stroke="#d0d0d0" stroke-width="1.700"/></svg>
<svg style="left:27px;top:285px" width="16" height="16" viewBox="0 0 16.500 16.500"><circle cx="8.200" cy="8.200" r="7.200" fill="none" stroke="#d0d0d0" stroke-width="1.700" stroke-dasharray="3.600 2.050"/></svg>
<svg style="left:53px;top:285px" width="16" height="16" viewBox="0 0 16.500 16.500"><path d="M12.200 0.800H15.800V3.800M0.800 12.200V15.800H3.800" fill="none" stroke="#d0d0d0" stroke-width="1.700"/><path d="M10 0.800H8.500C4.500 0.800 0.800 4.500 0.800 8.500V10M15.800 6V8.500L8.500 15.800H6" fill="none" stroke="#d0d0d0" stroke-width="1.700" stroke-dasharray="3.200 2"/></svg>
<svg style="left:79px;top:285px" width="16" height="16" viewBox="0 0 16.500 16.500"><path d="M3 1.500C6 0 11 1.500 13.500 4.500C16 8 16 12.500 13.500 15.500C11 15.500 9 13 9 10C9 8 7.500 7.500 5.500 8C2.500 8.500 0.500 6.500 1 4C1.300 3 2 2 3 1.500Z" fill="none" stroke="#d0d0d0" stroke-width="1.800" stroke-dasharray="2.600 1.700"/></svg>
<svg style="left:105px;top:285px" width="16" height="16" viewBox="0 0 16.500 16.500"><path d="M6 6L16 15.500" stroke="#d0d0d0" stroke-width="1.700"/><path d="M6 0.500V11M0.800 5.800H11.200M2.200 2L9.800 9.600M9.800 2L2.200 9.600" stroke="#d0d0d0" stroke-width="1.300"/><circle cx="6" cy="5.800" r="3" fill="#d0d0d0"/></svg>
<svg style="left:1px;top:311px" width="16" height="16" viewBox="0 0 16.500 16.500"><path d="M0.800 3.800V0.800H3.800M15.800 12.200V15.800H12.200M3.800 15.800H0.800V12.200M6.500 15.800H10M0.800 6.500V10M15.800 9V10.500" fill="none" stroke="#d0d0d0" stroke-width="1.700"/><path d="M3.800 12.500L4.300 10.500L9.500 5.300L11.300 7L6 12.300Z" fill="#d0d0d0"/><path d="M5.500 11L9.500 7" stroke="#494949" stroke-width="0.700"/><path d="M8.500 3.500L10 2L11 3L13 0.800L16 3.800L14 5.800L15 6.800L13.500 8.300Z" fill="#d0d0d0"/></svg>
<svg style="left:27px;top:311px" width="16" height="16" viewBox="0 0 16.500 16.500"><path d="M1.500 2.500H15" stroke="#d0d0d0" stroke-width="1.100"/><path d="M0 2.500L1.700 0.800L3.400 2.500L1.700 4.200ZM13 2.500L14.700 0.800L16.400 2.500L14.700 4.200Z" fill="#d0d0d0"/><rect x="6.700" y="1" width="3" height="3" fill="#494949" stroke="#d0d0d0" stroke-width="1"/><path d="M1 6.500V9.500M15.500 6.500V9.500M6.500 15.800H10" stroke="#d0d0d0" stroke-width="1.700"/><path d="M2 12.500L4.500 14.800M14.500 12.500L12 14.800" stroke="#d0d0d0" stroke-width="2.200"/></svg>
<svg style="left:53px;top:311px" width="16" height="16" viewBox="0 0 16.500 16.500"><path d="M0.800 3.800V0.800H3.800M15.800 13V15.800H12.200M3.800 15.800H0.800V12.200M6.500 15.800H10M0.800 6.500V10" fill="none" stroke="#d0d0d0" stroke-width="1.700"/><path d="M5.500 5.500C7 2 11 0.500 14 2.500C16.500 4.500 15.500 8.500 11.500 11" fill="none" stroke="#d0d0d0" stroke-width="2.200"/><path d="M4.700 6.200L6.500 4.700M10.500 11.700L12.300 10.300" stroke="#494949" stroke-width="0.700"/></svg>
<svg style="left:1px;top:343px" width="16" height="16" viewBox="0 0 16.500 16.500"><circle cx="10.300" cy="5.800" r="4.700" fill="none" stroke="#d0d0d0" stroke-width="1.700"/><path d="M7 9.500L1.500 15" stroke="#d0d0d0" stroke-width="2.600"/><path d="M2.300 12.200L4.300 14.200M4 10.500L6 12.500" stroke="#494949" stroke-width="0.500"/></svg>
<svg style="left:27px;top:343px" width="16" height="16" viewBox="0 0 16.500 16.500"><path d="M4.300 15.500C2.500 13 1.500 10.500 1 7.500C2.500 7.800 3.500 8.800 4.200 10.200V1.800C4.200 0.500 6 0.500 6 1.800V7H6.600V0.800C6.600 -0.500 8.500 -0.500 8.500 0.800V7H9.100V1.500C9.100 0.200 10.900 0.200 10.900 1.500V7.500H11.500V3.300C11.500 2 13.300 2 13.300 3.300V15.500Z" fill="#d0d0d0"/></svg>
<!-- RIGHT DOCK: tabs -->
<div class="a" style="left:1659px;top:57px;width:82px;height:24px;border:1px solid #5a5a5a;border-bottom:none;border-radius:4px 4px 0 0;background:#494949;box-shadow:0 0 0 1px #3c3c3c"></div>
<div class="a" style="left:1658px;top:79px;width:84px;height:3px;background:#494949"></div>
<div class="t d" style="left:1670px;top:62px">Tool <u>O</u>ptions</div>
<div class="a" style="left:1742px;top:59px;width:135px;height:21px;border:1px solid #5a5a5a;border-bottom:none;border-radius:4px 4px 0 0;background:#434343;box-shadow:0 0 0 1px #3c3c3c"></div>
<div class="a" style="left:1741px;top:79px;width:175px;height:1px;background:#3c3c3c"></div>
<div class="a" style="left:1741px;top:80px;width:175px;height:1px;background:#575757"></div>
<div class="t d" style="left:1752px;top:63px"><u>A</u>dvanced Color Selector</div>
<div class="t d" style="left:1662px;top:84px">Tool <u>O</u>ptions</div>
<svg style="left:1889px;top:85px" width="12" height="12" viewBox="0 0 12 12"><rect x="0.500" y="0.500" width="11" height="11" rx="2" fill="none" stroke="#8a8a8a" stroke-width="1" stroke-dasharray="1 1"/><path d="M2.500 4.500h5v5h-5zM4.500 4.500v-2h5v5h-2" fill="none" stroke="#777" stroke-width="1"/></svg>
<svg style="left:1903px;top:85px" width="12" height="12" viewBox="0 0 12 12"><rect x="0.500" y="0.500" width="11" height="11" rx="2" fill="none" stroke="#8a8a8a" stroke-width="1" stroke-dasharray="1 1"/><path d="M2 2l8 8M10 2l-8 8" stroke="#777" stroke-width="1.300"/></svg>
<div class="t d" style="left:1662px;top:113px">Brush Smoothing:</div>
<div class="btn" style="left:1772px;top:108px;width:140px;height:22px;border-radius:3px"></div>
<div class="t d" style="left:1777px;top:113px">Basic</div>
<svg style="left:1897px;top:118px" width="8" height="5"><path d="M0 0h8l-4 4.500z" fill="#9a9a9a"/></svg>
<div class="a" style="left:1662px;top:136px;width:250px;height:1px;background:#c4c4c4"></div>
<div class="a" style="left:1662px;top:145px;width:14px;height:14px;background:#383838;border-radius:1px"></div>
<div class="t d" style="left:1681px;top:146px">Snap to Assistants</div>
<div class="a" style="left:1780px;top:290px;width:17px;height:2px;background-image:linear-gradient(90deg,#8c8c8c 2px,transparent 2px);background-size:3px 2px"></div>
<!-- LAYERS -->
<div class="t d" style="left:1662px;top:298px">La<u>y</u>ers</div>
<svg style="left:1889px;top:298px" width="12" height="12" viewBox="0 0 12 12"><rect x="0.500" y="0.500" width="11" height="11" rx="2" fill="none" stroke="#8a8a8a" stroke-width="1" stroke-dasharray="1 1"/><path d="M2.500 4.500h5v5h-5zM4.500 4.500v-2h5v5h-2" fill="none" stroke="#777" stroke-width="1"/></svg>
<svg style="left:1903px;top:298px" width="12" height="12" viewBox="0 0 12 12"><rect x="0.500" y="0.500" width="11" height="11" rx="2" fill="none" stroke="#8a8a8a" stroke-width="1" stroke-dasharray="1 1"/><path d="M2 2l8 8M10 2l-8 8" stroke="#777" stroke-width="1.300"/></svg>
<div class="btn" style="left:1659px;top:314px;width:213px;height:22px;border-radius:3px"></div>
<div class="t d" style="left:1664px;top:319px">Normal</div>
<svg style="left:1857px;top:323px" width="8" height="5"><path d="M0 0h8l-4 4.500z" fill="#9a9a9a"/></svg>
<div class="btn" style="left:1873px;top:314px;width:42px;height:22px;border-radius:3px"></div>
<svg style="left:1879px;top:319px" width="12" height="13" viewBox="0 0 12 13"><path d="M0.600 0.600h10.800l-4 5.400v6l-2.800-1.500v-4.500z" fill="none" stroke="#d0d0d0" stroke-width="1.100"/></svg>
<svg style="left:1900px;top:323px" width="8" height="5"><path d="M0 0h8l-4 4.500z" fill="#9a9a9a"/></svg>
<div class="a" style="left:1659px;top:337px;width:225px;height:29px;border:1px solid #363636;border-radius:3px;background:#454545;box-shadow:inset 0 0 0 1px #565656"></div>
<div class="a hl" style="left:1660px;top:338px;width:209px;height:27px;border-radius:2px 0 0 2px"></div>
<div class="t d" style="left:1729px;top:346px;letter-spacing:0.150px">Opacity:&nbsp; 100%</div>
<svg style="left:1872px;top:344px" width="8" height="16"><path d="M0 4.500h8l-4-4.500z" fill="#707070"/><path d="M0 11.500h8l-4 4.500z" fill="#a8a8a8"/></svg>
<div class="btn" style="left:1885px;top:337px;width:30px;height:29px;border-radius:3px"></div>
<svg style="left:1891px;top:343px" width="20" height="18" viewBox="0 0 20 18"><rect x="0.700" y="0.700" width="16" height="15" fill="none" stroke="#d0d0d0" stroke-width="1.400"/><rect x="0" y="0" width="17.400" height="3.500" fill="#d0d0d0"/><path d="M3 6v8M7 7.200h8M7 10h8M7 12.800h8" stroke="#d0d0d0" stroke-width="1.500"/><path d="M15 15.500h5l-2.500 2.500z" fill="#9a9a9a"/></svg>
<div class="a" style="left:1659px;top:367px;width:257px;height:190px;background:#363636"></div>
<div class="a hl" style="left:1683px;top:368px;width:26px;height:26px"></div>
<div class="a hl" style="left:1710px;top:368px;width:14px;height:26px"></div>
<div class="a hl" style="left:1725px;top:368px;width:112px;height:26px"></div>
<div class="a hl" style="left:1838px;top:368px;width:18px;height:26px"></div>
<div class="a hl" style="left:1857px;top:368px;width:18px;height:26px"></div>
<div class="a hl" style="left:1876px;top:368px;width:18px;height:26px"></div>
<div class="a hl" style="left:1895px;top:368px;width:20px;height:26px"></div>
<svg style="left:1663px;top:374px" width="16" height="14" viewBox="0 0 16 14"><path d="M0.700 6C2.500 2.500 5 1 8 1s5.500 1.500 7.300 5" fill="none" stroke="#d4d4d4" stroke-width="1.200"/><path d="M0.700 7.500C2.500 11.500 5 13 8 13s5.500-1.500 7.300-5.500" fill="none" stroke="#d4d4d4" stroke-width="1.300"/><path d="M4.300 2.500a3.900 4.200 0 1 0 7.400 0z" fill="#d4d4d4"/><circle cx="8" cy="5" r="3.600" fill="#d4d4d4"/></svg>
<div class="a" style="left:1686px;top:372px;width:20px;height:20px;box-shadow:0 0 0 1px #2e2e2e;background-color:#fff;background-image:conic-gradient(#e0e0e0 25%,#fff 0 50%,#e0e0e0 0 75%,#fff 0);background-size:6px 6px"></div>
<svg style="left:1712px;top:370px" width="11" height="11" viewBox="0 0 11 11"><path d="M2.800 0.500h7.400v6.300l-2.800 2.900h-4.600v-3" fill="none" stroke="#d0d0d0" stroke-width="1"/><path d="M0.200 2.200l5.600 4.500" stroke="#d0d0d0" stroke-width="1.300"/><path d="M7.400 9.700v-2.900h2.800" fill="none" stroke="#d0d0d0" stroke-width="0.800"/></svg>
<div class="t d" style="left:1726px;top:375px;font-weight:bold;font-size:11px;letter-spacing:0;color:#dedede">Paint Layer 3</div>
<svg style="left:1839px;top:373px" width="15" height="17" viewBox="0 0 15 17"><path d="M7.500 4a3.600 3.600 0 0 1 2 6.500l-0.300 2.500h-3.400l-0.300-2.500a3.600 3.600 0 0 1 2-6.500z" fill="#e6e6e6"/><rect x="6" y="13.500" width="3" height="1.800" fill="#e6e6e6"/><path d="M7.500 0.300v2M2.500 2l1.300 1.500M12.500 2l-1.300 1.500M0.300 6.500h2M12.700 6.500h2M1.500 11l1.500-1M13.500 11l-1.500-1" stroke="#e6e6e6" stroke-width="1"/></svg>
<svg style="left:1859px;top:374px" width="12" height="14" viewBox="0 0 12 14"><path d="M6 5.500v-2.500a2.800 2.800 0 0 1 5.300 0v1.500" fill="none" stroke="#6d88a3" stroke-width="1.300"/><rect x="0.500" y="6.500" width="10.500" height="7" fill="#6d88a3"/></svg>
<div class="t d" style="left:1876px;top:370px;width:17px;height:20px;line-height:20px;text-align:center;font-size:19px;font-style:italic;color:#6d88a3">&#945;</div>
<div class="a" style="left:1896px;top:374px;width:15px;height:15px;background-color:#5f7d9b;background-image:conic-gradient(#8aa3bd 25%,#5f7d9b 0 50%,#8aa3bd 0 75%,#5f7d9b 0);background-size:10px 10px;background-position:5px 0"></div>
<div class="a" style="left:1682px;top:395px;width:1px;height:26px;background:#3b3b3b"></div>
<div class="a" style="left:1709px;top:395px;width:1px;height:26px;background:#3b3b3b"></div>
<div class="a" style="left:1724px;top:395px;width:1px;height:26px;background:#3b3b3b"></div>
<div class="a" style="left:1837px;top:395px;width:1px;height:26px;background:#3b3b3b"></div>
<div class="a" style="left:1856px;top:395px;width:1px;height:26px;background:#3b3b3b"></div>
<div class="a" style="left:1875px;top:395px;width:1px;height:26px;background:#3b3b3b"></div>
<div class="a" style="left:1894px;top:395px;width:1px;height:26px;background:#3b3b3b"></div>
<div class="a" style="left:1659px;top:421px;width:257px;height:1px;background:#3a3a3a"></div>
<svg style="left:1663px;top:401px" width="16" height="14" viewBox="0 0 16 14"><path d="M0.700 6C2.500 2.500 5 1 8 1s5.500 1.500 7.300 5" fill="none" stroke="#d4d4d4" stroke-width="1.200"/><path d="M0.700 7.500C2.500 11.500 5 13 8 13s5.500-1.500 7.300-5.500" fill="none" stroke="#d4d4d4" stroke-width="1.300"/><path d="M4.300 2.500a3.900 4.200 0 1 0 7.400 0z" fill="#d4d4d4"/><circle cx="8" cy="5" r="3.600" fill="#d4d4d4"/></svg>
<div class="a" style="left:1686px;top:399px;width:20px;height:20px;background-color:#fff;background-image:conic-gradient(#e0e0e0 25%,#fff 0 50%,#e0e0e0 0 75%,#fff 0);background-size:6px 6px"></div>
<svg style="left:1712px;top:397px" width="11" height="11" viewBox="0 0 11 11"><path d="M2.800 0.500h7.400v6.300l-2.800 2.900h-4.600v-3" fill="none" stroke="#d0d0d0" stroke-width="1"/><path d="M0.200 2.200l5.600 4.500" stroke="#d0d0d0" stroke-width="1.300"/><path d="M7.400 9.700v-2.900h2.800" fill="none" stroke="#d0d0d0" stroke-width="0.800"/></svg>
<div class="t d" style="left:1726px;top:402px;color:#dedede">Paint Layer 4</div>
<svg style="left:1842px;top:402px" width="9" height="13" viewBox="0 0 9 13"><path d="M4.500 0a3.800 3.800 0 0 1 2.200 6.900l-0.300 2.600h-3.800l-0.300-2.600a3.800 3.800 0 0 1 2.200-6.900z" fill="#6a6a6a"/><rect x="3" y="10" width="3" height="2.300" fill="#6a6a6a"/></svg>
<svg style="left:1859px;top:401px" width="12" height="14" viewBox="0 0 12 14"><path d="M6 5.500v-2.500a2.800 2.800 0 0 1 5.300 0v1.500" fill="none" stroke="#6a6a6a" stroke-width="1.300"/><rect x="0.500" y="6.500" width="10.500" height="7" fill="#6a6a6a"/></svg>
<div class="t d" style="left:1876px;top:397px;width:17px;height:20px;line-height:20px;text-align:center;font-size:19px;font-style:italic;color:#6a6a6a">&#945;</div>
<div class="a" style="left:1896px;top:401px;width:15px;height:15px;background-color:#505050;background-image:conic-gradient(#6e6e6e 25%,#505050 0 50%,#6e6e6e 0 75%,#505050 0);background-size:10px 10px;background-position:5px 0"></div>
<div class="a" style="left:1682px;top:422px;width:1px;height:26px;background:#3b3b3b"></div>
<div class="a" style="left:1709px;top:422px;width:1px;height:26px;background:#3b3b3b"></div>
<div class="a" style="left:1724px;top:422px;width:1px;height:26px;background:#3b3b3b"></div>
<div class="a" style="left:1837px;top:422px;width:1px;height:26px;background:#3b3b3b"></div>
<div class="a" style="left:1856px;top:422px;width:1px;height:26px;background:#3b3b3b"></div>
<div class="a" style="left:1875px;top:422px;width:1px;height:26px;background:#3b3b3b"></div>
<div class="a" style="left:1894px;top:422px;width:1px;height:26px;background:#3b3b3b"></div>
<div class="a" style="left:1659px;top:448px;width:257px;height:1px;background:#3a3a3a"></div>
<svg style="left:1663px;top:428px" width="16" height="14" viewBox="0 0 16 14"><path d="M0.700 6C2.500 2.500 5 1 8 1s5.500 1.500 7.300 5" fill="none" stroke="#d4d4d4" stroke-width="1.200"/><path d="M0.700 7.500C2.500 11.500 5 13 8 13s5.500-1.500 7.300-5.500" fill="none" stroke="#d4d4d4" stroke-width="1.300"/><path d="M4.300 2.500a3.900 4.200 0 1 0 7.400 0z" fill="#d4d4d4"/><circle cx="8" cy="5" r="3.600" fill="#d4d4d4"/></svg>
<div class="a" style="left:1686px;top:426px;width:20px;height:20px;background-color:#fff;background-image:conic-gradient(#e0e0e0 25%,#fff 0 50%,#e0e0e0 0 75%,#fff 0);background-size:6px 6px"></div>
<svg style="left:1686px;top:426px" width="20" height="20" viewBox="0 0 20 20"><path d="M9 3l2 1M12 5l1 2M8 7l-1 2M10 9l2 1M6 11l1 1M11 12l1 2M9 14l-2 1M12 16l1 1M5 15l1 2M13 9l1-2M7 5l1 1M10 17l1 1" stroke="#111" stroke-width="1"/></svg>
<svg style="left:1712px;top:424px" width="11" height="11" viewBox="0 0 11 11"><path d="M2.800 0.500h7.400v6.300l-2.800 2.900h-4.600v-3" fill="none" stroke="#d0d0d0" stroke-width="1"/><path d="M0.200 2.200l5.600 4.500" stroke="#d0d0d0" stroke-width="1.300"/><path d="M7.400 9.700v-2.900h2.800" fill="none" stroke="#d0d0d0" stroke-width="0.800"/></svg>
<div class="t d" style="left:1726px;top:429px;color:#dedede">Paint Layer 2</div>
<svg style="left:1842px;top:429px" width="9" height="13" viewBox="0 0 9 13"><path d="M4.500 0a3.800 3.800 0 0 1 2.200 6.900l-0.300 2.600h-3.800l-0.300-2.600a3.800 3.800 0 0 1 2.200-6.900z" fill="#6a6a6a"/><rect x="3" y="10" width="3" height="2.300" fill="#6a6a6a"/></svg>
<svg style="left:1859px;top:428px" width="12" height="14" viewBox="0 0 12 14"><path d="M6 5.500v-2.500a2.800 2.800 0 0 1 5.300 0v1.500" fill="none" stroke="#6a6a6a" stroke-width="1.300"/><rect x="0.500" y="6.500" width="10.500" height="7" fill="#6a6a6a"/></svg>
<div class="t d" style="left:1876px;top:424px;width:17px;height:20px;line-height:20px;text-align:center;font-size:19px;font-style:italic;color:#6a6a6a">&#945;</div>
<div class="a" style="left:1896px;top:428px;width:15px;height:15px;background-color:#505050;background-image:conic-gradient(#6e6e6e 25%,#505050 0 50%,#6e6e6e 0 75%,#505050 0);background-size:10px 10px;background-position:5px 0"></div>
<div class="a" style="left:1682px;top:449px;width:1px;height:26px;background:#3b3b3b"></div>
<div class="a" style="left:1709px;top:449px;width:1px;height:26px;background:#3b3b3b"></div>
<div class="a" style="left:1724px;top:449px;width:1px;height:26px;background:#3b3b3b"></div>
<div class="a" style="left:1837px;top:449px;width:1px;height:26px;background:#3b3b3b"></div>
<div class="a" style="left:1856px;top:449px;width:1px;height:26px;background:#3b3b3b"></div>
<div class="a" style="left:1875px;top:449px;width:1px;height:26px;background:#3b3b3b"></div>
<div class="a" style="left:1894px;top:449px;width:1px;height:26px;background:#3b3b3b"></div>
<div class="a" style="left:1659px;top:475px;width:257px;height:1px;background:#3a3a3a"></div>
<svg style="left:1663px;top:455px" width="16" height="14" viewBox="0 0 16 14"><path d="M0.700 6C2.500 2.500 5 1 8 1s5.500 1.500 7.300 5" fill="none" stroke="#5a5a5a" stroke-width="1.200"/><path d="M0.700 7.500C2.500 11.500 5 13 8 13s5.500-1.500 7.300-5.500" fill="none" stroke="#5a5a5a" stroke-width="1.300"/></svg>
<div class="a" style="left:1686px;top:453px;width:20px;height:20px;background:#7b7b7b"></div>
<svg style="left:1686px;top:453px" width="20" height="20" viewBox="0 0 20 20"><path d="M8 8c1 2 1 4 0 5M11 9c1 1 1 3 0 5M9 12h3" stroke="#4a4a4a" stroke-width="1" fill="none"/><path d="M5 6l1 1M13 5l1 1M15 10l1 1M6 14l1 1M12 16l1 0" stroke="#a08a6a" stroke-width="1"/></svg>
<svg style="left:1712px;top:451px" width="11" height="11" viewBox="0 0 11 11"><path d="M2.800 0.500h7.400v6.300l-2.800 2.900h-4.600v-3" fill="none" stroke="#5c5c5c" stroke-width="1"/><path d="M0.200 2.200l5.600 4.500" stroke="#5c5c5c" stroke-width="1.300"/><path d="M7.400 9.700v-2.900h2.800" fill="none" stroke="#5c5c5c" stroke-width="0.800"/></svg>
<div class="t d" style="left:1726px;top:456px;color:#6e6e6e">Paint Layer 1</div>
<svg style="left:1842px;top:456px" width="9" height="13" viewBox="0 0 9 13"><path d="M4.500 0a3.800 3.800 0 0 1 2.200 6.900l-0.300 2.600h-3.800l-0.300-2.600a3.800 3.800 0 0 1 2.200-6.900z" fill="#6a6a6a"/><rect x="3" y="10" width="3" height="2.300" fill="#6a6a6a"/></svg>
<svg style="left:1859px;top:455px" width="12" height="14" viewBox="0 0 12 14"><path d="M6 5.500v-2.500a2.800 2.800 0 0 1 5.300 0v1.500" fill="none" stroke="#6a6a6a" stroke-width="1.300"/><rect x="0.500" y="6.500" width="10.500" height="7" fill="#6a6a6a"/></svg>
<div class="t d" style="left:1876px;top:451px;width:17px;height:20px;line-height:20px;text-align:center;font-size:19px;font-style:italic;color:#6a6a6a">&#945;</div>
<div class="a" style="left:1896px;top:455px;width:15px;height:15px;background-color:#505050;background-image:conic-gradient(#6e6e6e 25%,#505050 0 50%,#6e6e6e 0 75%,#505050 0);background-size:10px 10px;background-position:5px 0"></div>
<div class="a" style="left:1682px;top:476px;width:1px;height:26px;background:#3b3b3b"></div>
<div class="a" style="left:1709px;top:476px;width:1px;height:26px;background:#3b3b3b"></div>
<div class="a" style="left:1724px;top:476px;width:1px;height:26px;background:#3b3b3b"></div>
<div class="a" style="left:1837px;top:476px;width:1px;height:26px;background:#3b3b3b"></div>
<div class="a" style="left:1856px;top:476px;width:1px;height:26px;background:#3b3b3b"></div>
<div class="a" style="left:1875px;top:476px;width:1px;height:26px;background:#3b3b3b"></div>
<div class="a" style="left:1894px;top:476px;width:1px;height:26px;background:#3b3b3b"></div>
<div class="a" style="left:1659px;top:502px;width:257px;height:1px;background:#3a3a3a"></div>
<svg style="left:1663px;top:482px" width="16" height="14" viewBox="0 0 16 14"><path d="M0.700 6C2.500 2.500 5 1 8 1s5.500 1.500 7.300 5" fill="none" stroke="#d4d4d4" stroke-width="1.200"/><path d="M0.700 7.500C2.500 11.500 5 13 8 13s5.500-1.500 7.300-5.500" fill="none" stroke="#d4d4d4" stroke-width="1.300"/><path d="M4.300 2.500a3.900 4.200 0 1 0 7.400 0z" fill="#d4d4d4"/><circle cx="8" cy="5" r="3.600" fill="#d4d4d4"/></svg>
<div class="a" style="left:1686px;top:480px;width:20px;height:20px;background:#fff"></div>
<svg style="left:1712px;top:478px" width="11" height="11" viewBox="0 0 11 11"><path d="M2.800 0.500h7.400v6.300l-2.800 2.900h-4.600v-3" fill="none" stroke="#d0d0d0" stroke-width="1"/><path d="M0.200 2.200l5.600 4.500" stroke="#d0d0d0" stroke-width="1.300"/><path d="M7.400 9.700v-2.900h2.800" fill="none" stroke="#d0d0d0" stroke-width="0.800"/></svg>
<div class="t d" style="left:1726px;top:483px;color:#dedede">Background</div>
<svg style="left:1859px;top:482px" width="12" height="14" viewBox="0 0 12 14"><path d="M2.500 7v-3a3.500 3.500 0 0 1 7 0v3" fill="none" stroke="#d8d8d8" stroke-width="1.600"/><rect x="0.500" y="6" width="11" height="7.500" fill="#d8d8d8"/></svg>
<div class="t d" style="left:1876px;top:478px;width:17px;height:20px;line-height:20px;text-align:center;font-size:19px;font-style:italic;color:#6a6a6a">&#945;</div>
<div class="a" style="left:1896px;top:482px;width:15px;height:15px;background-color:#505050;background-image:conic-gradient(#6e6e6e 25%,#505050 0 50%,#6e6e6e 0 75%,#505050 0);background-size:10px 10px;background-position:5px 0"></div>
<svg style="left:1663px;top:564px" width="16" height="16" viewBox="0 0 16 16"><rect x="0.800" y="0.800" width="14.400" height="14.400" fill="none" stroke="#d4d4d4" stroke-width="1.600"/><path d="M8 3.800v8.400M3.800 8h8.400" stroke="#d4d4d4" stroke-width="1.600"/></svg>
<svg style="left:1685px;top:570px" width="8" height="5"><path d="M0 0h8l-4 4.500z" fill="#8a8a8a"/></svg>
<svg style="left:1704px;top:564px" width="16" height="16" viewBox="0 0 16 16"><rect x="4.800" y="0.800" width="10.400" height="10.400" fill="none" stroke="#d4d4d4" stroke-width="1.600"/><path d="M0.800 4.500v10.700h10.700" fill="none" stroke="#d4d4d4" stroke-width="1.600"/></svg>
<svg style="left:1736px;top:566px" width="16" height="11" viewBox="0 0 16 11"><path d="M0.800 1.500l7.200 7.500 7.200-7.500" fill="none" stroke="#d4d4d4" stroke-width="2"/></svg>
<svg style="left:1768px;top:566px" width="16" height="11" viewBox="0 0 16 11"><path d="M0.800 9.500l7.200-7.500 7.200 7.500" fill="none" stroke="#d4d4d4" stroke-width="2"/></svg>
<svg style="left:1800px;top:564px" width="16" height="16" viewBox="0 0 16 16"><path d="M0 2.500h16M0 8h16M0 13.500h16" stroke="#d4d4d4" stroke-width="1.500"/><path d="M11.500 0.500v4M4.500 6v4M8.500 11.500v4" stroke="#d4d4d4" stroke-width="2.200"/></svg>
<svg style="left:1893px;top:564px" width="14" height="16" viewBox="0 0 14 16"><path d="M0 3h14v1.600h-14zM4 0.500h6v2h-6z" fill="#d4d4d4"/><path d="M1.200 5.500h11.600l-0.600 9.500a1 1 0 0 1-1 1h-8.400a1 1 0 0 1-1-1z" fill="#d4d4d4"/></svg>
<div class="a" style="left:1780px;top:589px;width:17px;height:2px;background-image:linear-gradient(90deg,#8c8c8c 2px,transparent 2px);background-size:3px 2px"></div>
<!-- BRUSH PRESETS -->
<div class="t d" style="left:1662px;top:597px"><u>B</u>rush Presets</div>
<svg style="left:1889px;top:597px" width="12" height="12" viewBox="0 0 12 12"><rect x="0.500" y="0.500" width="11" height="11" rx="2" fill="none" stroke="#8a8a8a" stroke-width="1" stroke-dasharray="1 1"/><path d="M2.500 4.500h5v5h-5zM4.500 4.500v-2h5v5h-2" fill="none" stroke="#777" stroke-width="1"/></svg>
<svg style="left:1903px;top:597px" width="12" height="12" viewBox="0 0 12 12"><rect x="0.500" y="0.500" width="11" height="11" rx="2" fill="none" stroke="#8a8a8a" stroke-width="1" stroke-dasharray="1 1"/><path d="M2 2l8 8M10 2l-8 8" stroke="#777" stroke-width="1.300"/></svg>
<div class="btn" style="left:1659px;top:613px;width:180px;height:22px;border-radius:3px"></div>
<div class="t d" style="left:1664px;top:618px">All</div>
<svg style="left:1824px;top:622px" width="8" height="5"><path d="M0 0h8l-4 4.500z" fill="#9a9a9a"/></svg>
<div class="btn" style="left:1840px;top:613px;width:51px;height:22px;border-radius:3px"></div>
<svg style="left:1847px;top:618px" width="8" height="12" viewBox="0 0 8 12"><path d="M0.600 11v-10.400h6.800v10.400l-3.400-2.500z" fill="none" stroke="#c8c8c8" stroke-width="1"/></svg>
<div class="t d" style="left:1861px;top:619px">Ta<u>g</u></div>
<svg style="left:1883px;top:628px" width="6" height="4"><path d="M0 0h6l-3 3.500z" fill="#8a8a8a"/></svg>
<div class="btn" style="left:1892px;top:613px;width:23px;height:22px;border-radius:3px"></div>
<svg style="left:1896px;top:618px" width="16" height="14" viewBox="0 0 16 14"><rect x="0.600" y="0.600" width="10.800" height="9.800" fill="none" stroke="#d0d0d0" stroke-width="1.200"/><path d="M0 0h12v2.600H0z" fill="#d0d0d0"/><path d="M2 4.800h2M5 4.800h5M2 6.800h2M5 6.800h5M2 8.600h2M5 8.600h5" stroke="#d0d0d0" stroke-width="0.900"/><path d="M10.500 11h5l-2.500 2.500z" fill="#9a9a9a"/></svg>
<!-- brush preset grid -->
<div class="a" style="left:1659px;top:636px;width:257px;height:140px;background:#3a3a3a"></div>
<svg width="0" height="0" style="left:0;top:0"><defs><pattern id="chk" width="4.400" height="4.400" patternUnits="userSpaceOnUse"><rect width="4.400" height="4.400" fill="#fff"/><rect width="2.200" height="2.200" fill="#9c9c9c"/><rect x="2.200" y="2.200" width="2.200" height="2.200" fill="#9c9c9c"/></pattern><pattern id="chk2" width="3" height="3" patternUnits="userSpaceOnUse"><rect width="3" height="3" fill="#fff"/><rect width="1.500" height="1.500" fill="#b4b4b4"/><rect x="1.500" y="1.500" width="1.500" height="1.500" fill="#b4b4b4"/></pattern><linearGradient id="gst" x1="0" x2="1"><stop offset="0" stop-color="#bcbcbc" stop-opacity="0.300"/><stop offset="0.350" stop-color="#777"/><stop offset="1" stop-color="#262626"/></linearGradient>
<linearGradient id="gst2" x1="0" x2="1"><stop offset="0" stop-color="#9c9c9c"/><stop offset="0.500" stop-color="#6a6a6a"/><stop offset="1" stop-color="#1e1e1e"/></linearGradient>
<linearGradient id="gst3" x1="0" x2="1"><stop offset="0" stop-color="#c4c4c4"/><stop offset="0.450" stop-color="#9a9a9a"/><stop offset="1" stop-color="#333"/></linearGradient>
<linearGradient id="fade" x1="0" x2="1"><stop offset="0" stop-color="#fff"/><stop offset="0.450" stop-color="#fff"/><stop offset="1" stop-color="#000"/></linearGradient>
<mask id="mfade" maskContentUnits="objectBoundingBox"><rect width="1" height="1" fill="url(#fade)"/></mask>
<radialGradient id="soft"><stop offset="0" stop-color="#343434"/><stop offset="0.500" stop-color="#3c3c3c"/><stop offset="0.800" stop-color="#808080" stop-opacity="0.600"/><stop offset="1" stop-color="#d2d2d2" stop-opacity="0"/></radialGradient>
<linearGradient id="metal" x1="0" x2="0" y1="0" y2="1"><stop offset="0" stop-color="#e8e8e8"/><stop offset="0.250" stop-color="#fff"/><stop offset="0.600" stop-color="#b0b0b0"/><stop offset="1" stop-color="#6a6a6a"/></linearGradient>
<linearGradient id="metal2" x1="0" x2="0" y1="0" y2="1"><stop offset="0" stop-color="#f4f4f4"/><stop offset="0.500" stop-color="#c4c4c4"/><stop offset="1" stop-color="#8a8a8a"/></linearGradient>
<linearGradient id="dark" x1="0" x2="0" y1="0" y2="1"><stop offset="0" stop-color="#2a2a2c"/><stop offset="0.350" stop-color="#505054"/><stop offset="1" stop-color="#262628"/></linearGradient>
<linearGradient id="blk" x1="0" x2="0" y1="0" y2="1"><stop offset="0" stop-color="#3a3a3a"/><stop offset="0.400" stop-color="#1a1a1a"/><stop offset="1" stop-color="#101010"/></linearGradient>
<linearGradient id="gry" x1="0" x2="0" y1="0" y2="1"><stop offset="0" stop-color="#a8a8a8"/><stop offset="0.400" stop-color="#7c7c7c"/><stop offset="1" stop-color="#6a6a6a"/></linearGradient>
<linearGradient id="blu" x1="0" x2="0" y1="0" y2="1"><stop offset="0" stop-color="#6a90ee"/><stop offset="0.450" stop-color="#2c5ad8"/><stop offset="1" stop-color="#1c3fa8"/></linearGradient>
<linearGradient id="blu2" x1="0" x2="0" y1="0" y2="1"><stop offset="0" stop-color="#5f7fe0"/><stop offset="0.500" stop-color="#3a52c0"/><stop offset="1" stop-color="#2a3a98"/></linearGradient>
<linearGradient id="wood" x1="0" x2="0" y1="0" y2="1"><stop offset="0" stop-color="#f4e4c0"/><stop offset="0.600" stop-color="#d8b98a"/><stop offset="1" stop-color="#b0905e"/></linearGradient>
<filter id="bl" x="-30%" y="-200%" width="160%" height="500%"><feGaussianBlur stdDeviation="1.100"/></filter><filter id="bl2" x="-30%" y="-200%" width="160%" height="500%"><feGaussianBlur stdDeviation="0.500"/></filter></defs></svg>
<svg style="left:1661px;top:638px;overflow:hidden" width="45" height="45" viewBox="0 0 45 45"><rect width="45" height="45" fill="#d2d2d2"/><circle cx="13.800" cy="30.500" r="6.600" fill="url(#chk)"/><path d="M8.500 34C12 42 24 40.500 33 35.500L31 32.500C25 35.500 20 36 17 33Z" fill="url(#chk)"/><path d="M29 37.500C34 35.500 38 33.500 42 31" stroke="url(#chk)" stroke-width="3.500" fill="none" opacity="0.450"/><path d="M20.500 5.700L26.800 0H45V12.800L31.500 23Z" fill="#3c5c94"/><path d="M26.800 0H45V3L29 3.500Z" fill="#5877ac"/><path d="M33 5l7-3.500" stroke="#b8c6de" stroke-width="1.600" stroke-dasharray="1 0.600"/><path d="M19.700 7.300L31 17V23L24.400 29.200L14.600 19.800L15.400 12.800Z" fill="#fbfbfb"/><path d="M31 17V23L24.400 29.200L24.800 22.500Z" fill="#bcbcbc"/><path d="M14.600 19.800L24.400 29.200L24.800 22.500L15.400 13.500Z" fill="#ededed"/><path d="M4.900 14.700L6 11.800L12.500 6.700L15.600 9.500L9 14.900Z" fill="none" stroke="#2c2c2c" stroke-width="1.200"/><path d="M11.500 7.500L13.600 5.800L15.800 8.200L13.800 9.800Z" fill="#2c2c2c"/><path d="M6.500 12.500L9 13.300" stroke="#2c2c2c" stroke-width="1"/></svg>
<svg style="left:1709px;top:638px;overflow:hidden" width="45" height="45" viewBox="0 0 45 45"><rect width="45" height="45" fill="#d2d2d2"/><path d="M15.800 29C13.500 34 15.500 39.500 21.800 40.200C27 40 33 35.500 35.900 30" fill="none" stroke="url(#chk2)" stroke-width="3.400" stroke-linecap="round"/><g transform="translate(17.6 26.5) rotate(-44.6)"><rect x="0" y="-3.200" width="4.200" height="6.400" fill="#ececec"/><rect x="0" y="1" width="4.200" height="2.200" fill="#c4c4c4"/><rect x="4" y="-4.4" width="56" height="8.8" fill="url(#blu2)" /><rect x="12" y="-1" width="20" height="2.600" rx="1.300" fill="#2f3f9c"/></g></svg>
<svg style="left:1757px;top:638px;overflow:hidden" width="45" height="45" viewBox="0 0 45 45"><rect width="45" height="45" fill="#d2d2d2"/><g filter="url(#bl2)" opacity="0.800"><path d="M5 28C10 25 16 28 22 30S32 33 35 37C34 42 26 42 20 40S7 34 5 28Z" fill="url(#chk)"/></g><path d="M29.400 0H45V19C41 20.500 38 23 34 25.300C30 27.500 26 29 23.100 28C20 27 18 25 18.400 21C18.600 17 19.500 13 23.100 7.300C25 4 27 2 29.400 0Z" fill="#787c83" filter="url(#bl2)"/><path d="M33 3C30 8 29 14 30 20" stroke="#8d9198" stroke-width="3" fill="none" filter="url(#bl)"/></svg>
<svg style="left:1805px;top:638px;overflow:hidden" width="45" height="45" viewBox="0 0 45 45"><rect width="45" height="45" fill="#d2d2d2"/><circle cx="8.500" cy="36" r="17" fill="url(#soft)"/><g transform="translate(20.3 24.6) rotate(-40)"><path d="M0 0C4-3 9-4.200 14.500-4.200V3.700C9 5 4 3 0 0Z" fill="url(#metal)"/><path d="M0 0.300C5 2.500 10 4 14.500 3.700" stroke="#444" stroke-width="0.700" fill="none"/><rect x="12.5" y="-4.6" width="5.5" height="9.2" fill="#161616" /><rect x="13.500" y="-4.600" width="3" height="3" fill="#666"/><rect x="18" y="-4.4" width="42" height="8.8" fill="url(#metal)" /><circle cx="12" cy="6.500" r="1.700" fill="none" stroke="#8a8a8a" stroke-width="0.900"/><path d="M9-4C7-8 8-10 10.500-9.500L12-4.500Z" fill="#e6e6e6"/></g></svg>
<svg style="left:1853px;top:638px;overflow:hidden" width="45" height="45" viewBox="0 0 45 45"><rect width="45" height="45" fill="#d2d2d2"/><path d="M18.800 36.800C26 38.500 36 36.500 48 31.500" fill="none" stroke="#24242a" stroke-width="6.800" stroke-linecap="round"/><g transform="translate(17.6 27.7) rotate(-48.7)"><path d="M0 -0.5L12.1 -3.75V3.75L0 0.5Z" fill="url(#metal2)"/><circle cx="0.800" cy="0" r="1" fill="#333"/><rect x="12.1" y="-4.1" width="47.9" height="8.2" fill="url(#dark)" /><rect x="26" y="-1.200" width="12" height="2.200" rx="1" fill="#77777b"/></g></svg>
<svg style="left:1661px;top:686px;overflow:hidden" width="45" height="45" viewBox="0 0 45 45"><rect width="45" height="45" fill="#d2d2d2"/><path d="M14.500 31.500C15.500 37.500 21 39.500 28 38.500S40 35.500 48 31.500" fill="none" stroke="url(#gst)" stroke-width="6.200" stroke-linecap="round"/><g transform="translate(17.4 28) rotate(-45)"><path d="M0 -0.6L13.3 -5.55V5.55L0 0.6Z" fill="#161616"/><path d="M0 0L13.300 1" stroke="#3c3c3c" stroke-width="0.600"/><rect x="13.3" y="-5.55" width="46.7" height="11.1" fill="url(#blk)" /><path d="M13.300-5.500V5.500" stroke="#4a4a4a" stroke-width="0.600"/><rect x="26" y="-2.500" width="9" height="2.200" rx="1" fill="#555"/></g></svg>
<svg style="left:1709px;top:686px;overflow:hidden" width="45" height="45" viewBox="0 0 45 45"><rect width="45" height="45" fill="#d2d2d2"/><path d="M13.500 33.500C14.500 38.500 19 38.500 23 36S30 33 35 34.200S44 35 48 34.700" fill="none" stroke="url(#gst2)" stroke-width="6.600" stroke-linecap="round" filter="url(#bl2)"/><g transform="translate(19 27.3) rotate(-47.5)"><path d="M0 -0.7L9.9 -4.3V4.3L0 0.7Z" fill="url(#metal)"/><path d="M9.400-4.300C10.600-2 10.600 2 9.400 4.300" stroke="#c8783a" stroke-width="0.900" fill="none"/><rect x="9.9" y="-4.5" width="50.1" height="9.0" fill="url(#metal2)" /><rect x="24" y="-2" width="30" height="3" rx="1.500" fill="#a4a4a4"/></g></svg>
<svg style="left:1757px;top:686px;overflow:hidden" width="45" height="45" viewBox="0 0 45 45"><rect width="45" height="45" fill="#d2d2d2"/><g filter="url(#bl)"><path d="M15 33.500C17 38 22 36 26 35S31 36 33 38.500S39 40 42 36.500S46 33 49 34" fill="none" stroke="#8e8e8e" stroke-width="7" stroke-linecap="round"/></g><g transform="translate(18 27.6) rotate(-47.4)"><path d="M0 -0.7L11.6 -5V5L0 0.7Z" fill="url(#metal)"/><rect x="11.6" y="-5.3" width="48.4" height="10.6" fill="url(#gry)" /><path d="M11.600-5.300V5.300" stroke="#5e5e5e" stroke-width="0.700"/><rect x="25" y="-2" width="30" height="3" rx="1.500" fill="#c8c8c8"/></g></svg>
<div class="a" style="left:1804px;top:685px;width:47px;height:47px;background:#55769a"></div>
<svg style="left:1808px;top:689px;overflow:hidden" width="39" height="39" viewBox="0 0 39 39"><rect width="39" height="39" fill="#86b7da"/><g fill="none" stroke="#1e2a52" stroke-linecap="round" stroke-linejoin="round"><path d="M12.400 25.300C11.600 27.500 11.300 29.500 11.800 30.800" stroke-width="1"/><path d="M11.800 30.800C12.500 32.500 14 32.800 15.500 32.300" stroke-width="1.700"/><path d="M15.500 32.300C18 31.300 19.500 29.200 21.500 29" stroke-width="2.400"/><path d="M21.500 29C23 29.300 23 30.800 23.500 32.300" stroke-width="3.400"/><path d="M23.500 32.300C24.200 34.200 25.500 35.300 27.500 35.400" stroke-width="4.600"/><path d="M27.500 35.200C32 34.800 36 32.500 41 29.500" stroke-width="7"/><path d="M31 35.500C35 34 38 32 41 30.500" stroke-width="8.500"/></g><g transform="translate(13 22.6) rotate(-41)"><path d="M0 0.300C3-2.500 7-3.600 11.800-3.300V3.300C7 3.600 3 2.500 0 0.300Z" fill="#1c1230"/><path d="M2-1C5-2.800 8-3.400 11.800-3.300V-1.500C8-2 5-1.800 2-1Z" fill="#5a5a7a"/><rect x="11.8" y="-3.1" width="16.2" height="6.2" fill="#b4d4ee" /><rect x="11.800" y="0.300" width="16.200" height="2.800" fill="#8c9ce0"/><path d="M11.800-3.100h16.200M11.800 3.100h16.200" stroke="#2a3a62" stroke-width="0.600"/><path d="M28-3.300h12v6.600h-12z" fill="#26365e"/></g><g transform="translate(-2.800,-3)"><path d="M4.900 14.700L6 11.800L12.500 6.700L15.600 9.500L9 14.900Z" fill="none" stroke="#1e2a52" stroke-width="1.200"/><path d="M11.500 7.500L13.600 5.800L15.800 8.200L13.800 9.800Z" fill="#1e2a52"/><path d="M6.500 12.500L9 13.300" stroke="#1e2a52" stroke-width="1"/></g></svg>
<svg style="left:1853px;top:686px;overflow:hidden" width="45" height="45" viewBox="0 0 45 45"><rect width="45" height="45" fill="#d2d2d2"/><g fill="none" stroke-linecap="round" stroke-linejoin="round"><path d="M14.800 28.300C14.300 31 14.300 34 15.600 35.300" stroke="#c0c0c0" stroke-width="0.900"/><path d="M15.600 35.300C18 36.200 21 32.500 24.300 32.500" stroke="#b4b4b4" stroke-width="1.500"/><path d="M24.300 32.500C26.300 33 26 36.500 27.300 38.300" stroke="#a6a6a6" stroke-width="2.600"/><path d="M27.300 38.300C29 39.600 32 38.800 34 37.800" stroke="#888" stroke-width="3.600"/><path d="M33 38C37 36.500 41 34.500 47 32" stroke="url(#gst3)" stroke-width="7.500"/></g><g transform="translate(16 25.5) rotate(-40.5)"><path d="M0 0C3-3.200 8-3.400 12.900-2.800V2.800C8 3.600 3 2.500 0 0Z" fill="#8a5a3c"/><path d="M0 0C4 1.800 8 3 12.900 2.800V0.500C8 1 4 0.800 0 0Z" fill="#4a2418"/><rect x="12.9" y="-2.7" width="16.700000000000003" height="5.4" fill="#e9e4ee" /><rect x="12.900" y="0.500" width="16.700" height="2.200" fill="#c8b4d6"/><path d="M12.900-2.700h16.700M12.900 2.700h16.700" stroke="#7a6a6a" stroke-width="0.500"/><rect x="29.6" y="-2.9" width="30.4" height="5.8" fill="#e8a020" /><rect x="29.600" y="0.800" width="31" height="2.100" fill="#c07c10"/></g></svg>
<svg style="left:1661px;top:734px;overflow:hidden" width="45" height="40" viewBox="0 0 45 40"><rect width="45" height="45" fill="#d2d2d2"/><path d="M10.500 40C13 35 17 33 21 32.500S27 33 26 40" fill="none" stroke="#8a8a8a" stroke-width="0.800"/><path d="M33 40C38 38 42 34 45.500 29.500" fill="none" stroke="#1c1c1c" stroke-width="1.800"/><g transform="translate(18.6 25.6) rotate(-43)"><path d="M0 0.500C3-1.800 6-1.600 9.400-1.200V1.200C6 1.800 3 1.500 0 0.500Z" fill="#5a2a22"/><rect x="9.4" y="-1.5" width="11.1" height="3.0" fill="#d8c8e0" /><path d="M9.400-1.500h11M9.400 1.500h11" stroke="#6a5a6a" stroke-width="0.500"/><rect x="20.5" y="-2" width="39.5" height="4" fill="#e4861c" /><rect x="20.500" y="0.600" width="40" height="1.400" fill="#b8640e"/></g></svg>
<svg style="left:1709px;top:734px;overflow:hidden" width="45" height="40" viewBox="0 0 45 40"><rect width="45" height="45" fill="#d2d2d2"/><circle cx="12.400" cy="11.300" r="3.500" fill="none" stroke="#a8a8a8" stroke-width="0.700"/><path d="M9.500 11.300h4" stroke="#a8a8a8" stroke-width="0.600"/><path d="M14 30C12 35 13 38 16 40M24 40C26 36 28 35 29.500 37S32 38 34 36S38 35 41 36" fill="none" stroke="#b0b0b0" stroke-width="0.800"/><g transform="translate(17.1 27.5) rotate(-38)"><path d="M0 -0.3L3.8 -1.4V1.4L0 0.3Z" fill="#1a2648"/><path d="M3.8 -1.4L14.1 -4.75V4.75L3.8 1.4Z" fill="url(#wood)"/><rect x="14.1" y="-4.75" width="45.9" height="9.5" fill="url(#blu)" /><path d="M14.100-1.600H60" stroke="#1c3fa8" stroke-width="0.500"/></g></svg>
<svg style="left:1757px;top:734px;overflow:hidden" width="45" height="40" viewBox="0 0 45 40"><rect width="45" height="45" fill="#d2d2d2"/><path d="M16 30.500C12.500 34 12 38.500 15 40C18 41 22 37 25 33.500S28.500 34 28.500 37.500S31 41 35 38S42 36 46 36.500" fill="none" stroke="#2c2c2c" stroke-width="0.900"/><g transform="translate(17.1 27.5) rotate(-38)"><path d="M0 -0.3L3.8 -1.4V1.4L0 0.3Z" fill="#1a1a28"/><path d="M3.8 -1.4L14.1 -4.4V4.4L3.8 1.4Z" fill="url(#wood)"/><rect x="14.1" y="-4.5" width="5.4" height="9.0" fill="#30323a" /><path d="M17-4.500C18-2 18 2 17 4.500" stroke="#c42020" stroke-width="1.200" fill="none"/><rect x="19.5" y="-4.5" width="40.5" height="9.0" fill="url(#dark)" /></g></svg>
<svg style="left:1805px;top:734px;overflow:hidden" width="45" height="40" viewBox="0 0 45 40"><rect width="45" height="45" fill="#d2d2d2"/><g filter="url(#bl2)"><path d="M17.500 29.500C14 33 15 38 20 39.500S32 39 38 37S43 35 46 33.500" fill="none" stroke="#6a6a6a" stroke-width="1.800"/><path d="M30 40C36 38.500 41 36.500 46 34" fill="none" stroke="#222" stroke-width="1.800"/></g><g transform="translate(20.2 23.8) rotate(-37.8)"><circle cx="1.300" cy="0" r="2.200" fill="#24242c"/><path d="M2.5 -1.8L15.3 -6.7V6.7L2.5 1.8Z" fill="url(#wood)"/><rect x="15.3" y="-6.7" width="44.7" height="13.4" fill="#bfa78e" /><rect x="15.300" y="-6.700" width="45" height="3.500" fill="#d8c4a6"/><rect x="15.300" y="3.200" width="45" height="3.500" fill="#9a8494"/><path d="M15.300-6.700L12 -2L15.300 0L12 3L15.300 6.700Z" fill="#bfa78e"/></g></svg>
<svg style="left:1853px;top:734px;overflow:hidden" width="45" height="40" viewBox="0 0 45 40"><rect width="45" height="45" fill="#d2d2d2"/><g filter="url(#bl2)"><path d="M15 30C10.500 34 11 39.500 16 40.500M28 40C31 36 34 33.500 37 33S39 36 41.500 36S43 33 45 34V40" fill="none" stroke="#8c8c8c" stroke-width="1.600"/></g><g transform="translate(18.6 26.5) rotate(-40.4)"><path d="M0 -0.3L7 -1.7V1.7L0 0.3Z" fill="#6e6e6e"/><path d="M7 -1.7L12 -3V3L7 1.7Z" fill="#9a9a9a"/><rect x="12" y="-3" width="6" height="6" fill="url(#metal)" /><rect x="18" y="-3.4" width="42" height="6.8" fill="url(#metal)" /><path d="M18-3.400V3.400M14-3V3" stroke="#777" stroke-width="0.500"/></g></svg>
<div class="trough" style="left:1901px;top:637px;width:14px;height:137px;background:#3c3c3c"></div>
<div class="sbtn" style="left:1901px;top:637px;width:14px;height:14px"><svg style="left:2px;top:3px" width="8" height="5"><path d="M0 4.500h8l-4-4.500z" fill="#9a9a9a"/></svg></div>
<div class="a" style="left:1901px;top:651px;width:14px;height:26px;border:1px solid #535353;background:#434343"></div>
<div class="sbtn" style="left:1901px;top:761px;width:14px;height:13px"><svg style="left:2px;top:4px" width="8" height="5"><path d="M0 0h8l-4 4.500z" fill="#9a9a9a"/></svg></div>
<div class="a" style="left:1659px;top:776px;width:258px;height:21px;border-radius:3px 0 0 3px;background:#3a3a3a"></div>
<div class="t d" style="left:1662px;top:779px;color:#8a8a8a">Search</div>
<!-- ANIMATION DOCKER -->
<div class="t d" style="left:1px;top:808px">Animation</div>
<svg style="left:217px;top:808px" width="12" height="12" viewBox="0 0 12 12"><rect x="0.500" y="0.500" width="11" height="11" rx="2" fill="none" stroke="#8a8a8a" stroke-width="1" stroke-dasharray="1 1"/><path d="M2.500 4.500h5v5h-5zM4.500 4.500v-2h5v5h-2" fill="none" stroke="#777" stroke-width="1"/></svg>
<svg style="left:231px;top:808px" width="12" height="12" viewBox="0 0 12 12"><rect x="0.500" y="0.500" width="11" height="11" rx="2" fill="none" stroke="#8a8a8a" stroke-width="1" stroke-dasharray="1 1"/><path d="M2 2l8 8M10 2l-8 8" stroke="#777" stroke-width="1.300"/></svg>
<div class="a" style="left:-2px;top:825px;width:99px;height:47px;border:1px solid #363636;border-radius:3px;background:#353535"></div>
<div class="a" style="left:83px;top:826px;width:13px;height:45px;border-left:1px solid #3a3a3a;border-radius:0 3px 3px 0;background:linear-gradient(#4d4d4d,#434343);box-shadow:inset 0 0 0 1px #585858"></div>
<svg style="left:85px;top:836px" width="8" height="5"><path d="M0 4.500h8l-4-4.500z" fill="#9a9a9a"/></svg>
<svg style="left:85px;top:857px" width="8" height="5"><path d="M0 0h8l-4 4.500z" fill="#9a9a9a"/></svg>
<div class="t" style="left:0;top:839px;width:79px;height:22px;line-height:22px;text-align:center;font-size:18px;font-weight:bold;letter-spacing:0.800px">32</div>
<div class="t d" style="left:100px;top:829px;width:67px;text-align:right">Start:</div>
<div class="inp" style="left:174px;top:825px;width:69px;height:21px"></div>
<div class="a" style="left:228px;top:826px;width:14px;height:19px;border-left:1px solid #3a3a3a;border-radius:0 3px 3px 0;background:linear-gradient(#4d4d4d,#434343);box-shadow:inset 0 0 0 1px #585858"></div>
<svg style="left:231px;top:828px" width="8" height="14"><path d="M0 4.500h8l-4-4.500z" fill="#8c8c8c"/><path d="M0 9.500h8l-4 4.500z" fill="#8c8c8c"/></svg>
<div class="t d" style="left:174px;top:830px;width:49px;text-align:right">0</div>
<div class="t d" style="left:100px;top:855px;width:65px;text-align:right">End:</div>
<div class="inp" style="left:174px;top:851px;width:69px;height:21px"></div>
<div class="a" style="left:228px;top:852px;width:14px;height:19px;border-left:1px solid #3a3a3a;border-radius:0 3px 3px 0;background:linear-gradient(#4d4d4d,#434343);box-shadow:inset 0 0 0 1px #585858"></div>
<svg style="left:231px;top:854px" width="8" height="14"><path d="M0 4.500h8l-4-4.500z" fill="#a8a8a8"/><path d="M0 9.500h8l-4 4.500z" fill="#a8a8a8"/></svg>
<div class="t d" style="left:174px;top:856px;width:49px;text-align:right">80</div>
<div class="a" style="left:6px;top:883px;width:228px;height:1px;background:#363636"></div>
<div class="a" style="left:6px;top:884px;width:228px;height:1px;background:#525252"></div>
<div class="a" style="left:6px;top:915px;width:228px;height:1px;background:#363636"></div>
<div class="a" style="left:6px;top:916px;width:228px;height:1px;background:#525252"></div>
<div class="a" style="left:36px;top:886px;width:1px;height:29px;background:#363636"></div><div class="a" style="left:37px;top:886px;width:1px;height:29px;background:#525252"></div>
<div class="a" style="left:69px;top:886px;width:1px;height:29px;background:#363636"></div><div class="a" style="left:70px;top:886px;width:1px;height:29px;background:#525252"></div>
<div class="a" style="left:102px;top:886px;width:1px;height:29px;background:#363636"></div><div class="a" style="left:103px;top:886px;width:1px;height:29px;background:#525252"></div>
<div class="a" style="left:135px;top:886px;width:1px;height:29px;background:#363636"></div><div class="a" style="left:136px;top:886px;width:1px;height:29px;background:#525252"></div>
<div class="a" style="left:168px;top:886px;width:1px;height:29px;background:#363636"></div><div class="a" style="left:169px;top:886px;width:1px;height:29px;background:#525252"></div>
<div class="a" style="left:201px;top:886px;width:1px;height:29px;background:#363636"></div><div class="a" style="left:202px;top:886px;width:1px;height:29px;background:#525252"></div>
<svg style="left:14px;top:892px" width="18" height="16" viewBox="0 0 18 16"><path d="M0 2h1.500v12H0zM2.700 2h1.500v12H2.700zM6 8l8.500-8v16zM15.500 0h1.700v16h-1.700z" fill="#d2d2d2"/></svg>
<svg style="left:47px;top:892px" width="15" height="16" viewBox="0 0 15 16"><path d="M0 2h1.800v12H0zM3.500 8l8.500-8v16zM13 0h1.700v16H13z" fill="#d2d2d2"/></svg>
<svg style="left:82px;top:892px" width="12" height="16" viewBox="0 0 12 16"><path d="M0 8l8-8v16zM9.300 0h1.800v16H9.300z" fill="#d2d2d2"/></svg>
<svg style="left:116px;top:890px" width="10" height="20" viewBox="0 0 10 20"><path d="M0 0l10 10-10 10z" fill="#d2d2d2"/></svg>
<svg style="left:148px;top:892px" width="12" height="16" viewBox="0 0 12 16"><path d="M0 0h1.800v16H0zM3.200 0l8 8-8 8z" fill="#d2d2d2"/></svg>
<svg style="left:179px;top:892px" width="15" height="16" viewBox="0 0 15 16"><path d="M0 0h1.700v16H0zM2.800 0l8.500 8-8.500 8zM12.500 2h1.800v12h-1.800z" fill="#d2d2d2"/></svg>
<svg style="left:212px;top:892px" width="18" height="16" viewBox="0 0 18 16"><path d="M0 0h1.700v16H0zM2.800 0l8.500 8-8.500 8zM12.300 2h1.500v12h-1.500zM15 2h1.500v12H15z" fill="#d2d2d2"/></svg>
<svg style="left:3px;top:935px" width="19" height="13" viewBox="0 0 19 13"><rect x="0" y="0" width="19" height="13" fill="#d2d2d2"/><rect x="3.600" y="1.800" width="11.800" height="9.400" fill="#494949"/><path d="M1.800 1v11M17.200 1v11" stroke="#494949" stroke-width="1" stroke-dasharray="1 1"/></svg>
<svg style="left:29px;top:940px" width="8" height="5"><path d="M0 0h8l-4 4.500z" fill="#7a7a7a"/></svg>
<svg style="left:45px;top:934px" width="21" height="15" viewBox="0 0 21 15"><rect x="0" y="4" width="16" height="11" fill="#d2d2d2"/><rect x="3" y="5.600" width="10" height="7.800" fill="#494949"/><rect x="4.500" y="0" width="16.500" height="11" fill="#d2d2d2"/><rect x="7.500" y="1.600" width="10.500" height="7.800" fill="#494949"/><path d="M6 1v9M19.500 1v9M1.500 5v9" stroke="#494949" stroke-width="0.900" stroke-dasharray="1 1"/></svg>
<svg style="left:77px;top:933px" width="19" height="17" viewBox="0 0 19 17"><rect x="0" y="2" width="18.500" height="13" fill="#d2d2d2"/><rect x="3.500" y="3.700" width="11.500" height="9.600" fill="#494949"/><path d="M1.800 3v11M16.800 3v11" stroke="#494949" stroke-width="1" stroke-dasharray="1 1"/><path d="M3 17L16 0" stroke="#494949" stroke-width="3.200"/><path d="M3 17L16 0" stroke="#d2d2d2" stroke-width="1.300"/></svg>
<svg style="left:103px;top:940px" width="8" height="5"><path d="M0 0h8l-4 4.500z" fill="#7a7a7a"/></svg>
<div class="t d" style="left:110px;top:933px;width:76px;text-align:right">Play Speed:</div>
<div class="inp" style="left:189px;top:929px;width:54px;height:21px"></div>
<div class="a" style="left:228px;top:930px;width:14px;height:19px;border-left:1px solid #3a3a3a;border-radius:0 3px 3px 0;background:linear-gradient(#4d4d4d,#434343);box-shadow:inset 0 0 0 1px #585858"></div>
<svg style="left:231px;top:932px" width="8" height="14"><path d="M0 4.500h8l-4-4.500z" fill="#8c8c8c"/><path d="M0 9.500h8l-4 4.500z" fill="#8c8c8c"/></svg>
<div class="t d" style="left:189px;top:934px;width:34px;text-align:right">1.00</div>
<div class="t d" style="left:110px;top:957px;width:76px;text-align:right">Frame Rate:</div>
<div class="inp" style="left:189px;top:953px;width:54px;height:21px"></div>
<div class="a" style="left:228px;top:954px;width:14px;height:19px;border-left:1px solid #3a3a3a;border-radius:0 3px 3px 0;background:linear-gradient(#4d4d4d,#434343);box-shadow:inset 0 0 0 1px #585858"></div>
<svg style="left:231px;top:956px" width="8" height="14"><path d="M0 4.500h8l-4-4.500z" fill="#8c8c8c"/><path d="M0 9.500h8l-4 4.500z" fill="#8c8c8c"/></svg>
<div class="t d" style="left:189px;top:958px;width:34px;text-align:right">24</div>
<svg style="left:8px;top:961px" width="20" height="20" viewBox="0 0 20 20"><path d="M10 0C10.500 4 19.500 9 19 14.500C18.500 18 14 20 10 20S1.500 18 1 14.500C0.500 9 9.500 4 10 0Z" fill="#d2d2d2"/><path d="M9.500 3C7 8 5 12 6.500 18.500M11.500 4.500C10.500 9 10.500 14 12.500 19.500M14 7C14 11 15 15 17 17.500M6 7.500C3.500 11 3 14 3.800 17" fill="none" stroke="#494949" stroke-width="1.300"/></svg>
<div class="btn" style="left:40px;top:957px;width:30px;height:29px;background:linear-gradient(#404040,#3a3a3a)"></div>
<svg style="left:46px;top:961px" width="19" height="17" viewBox="0 0 19 17"><rect x="0" y="3" width="18" height="13" fill="#d2d2d2"/><rect x="3.300" y="4.700" width="11.400" height="9.600" fill="#3d3d3d"/><path d="M1.700 4v11M16.300 4v11" stroke="#3d3d3d" stroke-width="1" stroke-dasharray="1 1"/><path d="M8.500 11.500L13.500 1" stroke="#3d3d3d" stroke-width="3.400"/><path d="M8.500 11.500L13.500 1" stroke="#d2d2d2" stroke-width="1.700"/></svg>
<div class="btn" style="left:77px;top:957px;width:30px;height:29px;background:linear-gradient(#404040,#3a3a3a)"></div>
<svg style="left:83px;top:961px" width="19" height="18" viewBox="0 0 19 18"><rect x="0" y="3" width="18" height="12.500" fill="#d2d2d2"/><rect x="3.300" y="4.700" width="11.400" height="9.100" fill="#3d3d3d"/><path d="M1.700 4v10.500M16.300 4v10.500" stroke="#3d3d3d" stroke-width="1" stroke-dasharray="1 1"/><path d="M7.500 6.500l4 2.700-4 2.700z" fill="#d2d2d2"/><path d="M11.500 4L14.500 0.500M3 17.500L6 14" stroke="#3d3d3d" stroke-width="3"/><path d="M11.500 4L14.500 0.500M3 17.500L6 14" stroke="#d2d2d2" stroke-width="1.200"/></svg>
<div class="a" style="left:247px;top:889px;width:2px;height:17px;background-image:linear-gradient(#8c8c8c 2px,transparent 2px);background-size:2px 3px"></div>
<!-- TIMELINE DOCKER -->
<div class="t d" style="left:254px;top:808px">Ti<u>m</u>eline</div>
<svg style="left:1889px;top:808px" width="12" height="12" viewBox="0 0 12 12"><rect x="0.500" y="0.500" width="11" height="11" rx="2" fill="none" stroke="#8a8a8a" stroke-width="1" stroke-dasharray="1 1"/><path d="M2.500 4.500h5v5h-5zM4.500 4.500v-2h5v5h-2" fill="none" stroke="#777" stroke-width="1"/></svg>
<svg style="left:1903px;top:808px" width="12" height="12" viewBox="0 0 12 12"><rect x="0.500" y="0.500" width="11" height="11" rx="2" fill="none" stroke="#8a8a8a" stroke-width="1" stroke-dasharray="1 1"/><path d="M2 2l8 8M10 2l-8 8" stroke="#777" stroke-width="1.300"/></svg>
<div class="a" style="left:425px;top:823px;width:1491px;height:150px;background:#363636"></div>
<div class="a" style="left:425px;top:823px;width:1491px;height:14px;background:#353535"></div>
<div class="a" style="left:425px;top:842px;width:1491px;height:23px;background:#3a424c"></div>
<div class="a" style="left:425px;top:962px;width:1491px;height:11px;background:#363636"></div>
<div class="a" style="left:852.0px;top:842px;width:30px;height:23px;background:#54738f"></div>
<div class="a" style="left:883.0px;top:842px;width:30px;height:23px;background:#54738f"></div>
<div class="a" style="left:914.0px;top:842px;width:30px;height:23px;background:#54738f"></div>
<div class="a" style="left:945.0px;top:842px;width:30px;height:23px;background:#54738f"></div>
<div class="a" style="left:976.0px;top:842px;width:30px;height:23px;background:#54738f"></div>
<div class="a" style="left:1007.0px;top:842px;width:30px;height:23px;background:#54738f"></div>
<div class="a" style="left:1038.0px;top:842px;width:30px;height:23px;background:#54738f"></div>
<div class="a" style="left:1069.0px;top:842px;width:30px;height:23px;background:#54738f"></div>
<div class="a" style="left:1100.0px;top:842px;width:30px;height:23px;background:#54738f"></div>
<div class="a" style="left:1131.0px;top:842px;width:30px;height:23px;background:#54738f"></div>
<div class="a" style="left:1162.0px;top:842px;width:30px;height:23px;background:#54738f"></div>
<div class="a" style="left:1193.0px;top:842px;width:30px;height:23px;background:#54738f"></div>
<div class="a" style="left:1224.0px;top:842px;width:30px;height:23px;background:#54738f"></div>
<div class="a" style="left:1255.0px;top:842px;width:30px;height:23px;background:#54738f"></div>
<div class="a" style="left:1286.0px;top:842px;width:30px;height:23px;background:#54738f"></div>
<div class="a" style="left:1317.0px;top:842px;width:30px;height:23px;background:#54738f"></div>
<div class="a" style="left:1348.0px;top:842px;width:30px;height:23px;background:#54738f"></div>
<div class="a" style="left:1379.0px;top:842px;width:30px;height:23px;background:#54738f"></div>
<div class="a" style="left:1410.0px;top:842px;width:30px;height:23px;background:#54738f"></div>
<div class="a" style="left:1441.0px;top:842px;width:30px;height:23px;background:#54738f"></div>
<div class="a" style="left:1472.0px;top:842px;width:30px;height:23px;background:#54738f"></div>
<div class="a" style="left:1503.0px;top:842px;width:30px;height:23px;background:#54738f"></div>
<div class="a" style="left:1534.0px;top:842px;width:30px;height:23px;background:#54738f"></div>
<div class="a" style="left:1565.0px;top:842px;width:30px;height:23px;background:#54738f"></div>
<div class="a" style="left:1596.0px;top:842px;width:30px;height:23px;background:#54738f"></div>
<div class="a" style="left:1627.0px;top:842px;width:30px;height:23px;background:#54738f"></div>
<div class="a" style="left:1658.0px;top:842px;width:30px;height:23px;background:#54738f"></div>
<div class="a" style="left:1689.0px;top:842px;width:30px;height:23px;background:#54738f"></div>
<div class="a" style="left:1720.0px;top:842px;width:30px;height:23px;background:#54738f"></div>
<div class="a" style="left:1751.0px;top:842px;width:30px;height:23px;background:#54738f"></div>
<div class="a" style="left:1782.0px;top:842px;width:30px;height:23px;background:#54738f"></div>
<div class="a" style="left:1813.0px;top:842px;width:30px;height:23px;background:#54738f"></div>
<div class="a" style="left:1875.0px;top:842px;width:30px;height:23px;background:#54738f"></div>
<div class="a" style="left:1720.0px;top:866px;width:30px;height:23px;background:#54738f"></div>
<div class="a" style="left:449.0px;top:890px;width:30px;height:23px;background:#54738f"></div>
<div class="a" style="left:542.0px;top:890px;width:30px;height:23px;background:#54738f"></div>
<div class="a" style="left:635.0px;top:890px;width:30px;height:23px;background:#54738f"></div>
<div class="a" style="left:728.0px;top:890px;width:30px;height:23px;background:#54738f"></div>
<div class="a" style="left:759.0px;top:890px;width:30px;height:23px;background:#54738f"></div>
<div class="a" style="left:790.0px;top:890px;width:30px;height:23px;background:#54738f"></div>
<div class="a" style="left:821.0px;top:890px;width:30px;height:23px;background:#54738f"></div>
<div class="a" style="left:852.0px;top:890px;width:30px;height:23px;background:#54738f"></div>
<div class="a" style="left:883.0px;top:890px;width:30px;height:23px;background:#54738f"></div>
<div class="a" style="left:914.0px;top:890px;width:30px;height:23px;background:#54738f"></div>
<div class="a" style="left:728.0px;top:914px;width:30px;height:23px;background:#3f4650"></div>
<div class="a" style="left:759.0px;top:914px;width:30px;height:23px;background:#3f4650"></div>
<div class="a" style="left:790.0px;top:914px;width:30px;height:23px;background:#3f4650"></div>
<div class="a" style="left:821.0px;top:914px;width:30px;height:23px;background:#3f4650"></div>
<div class="a" style="left:852.0px;top:914px;width:30px;height:23px;background:#3f4650"></div>
<div class="a" style="left:883.0px;top:914px;width:30px;height:23px;background:#3f4650"></div>
<div class="a" style="left:914.0px;top:914px;width:30px;height:23px;background:#3f4650"></div>
<div class="a" style="left:1843.4px;top:853px;width:31.0px;height:1px;background:#4d6985"></div>
<div class="a" style="left:1905.4px;top:853px;width:10.599999999999909px;height:1px;background:#4d6985"></div>
<div class="a" style="left:1750.4px;top:877px;width:165.5999999999999px;height:1px;background:#4d6985"></div>
<div class="a" style="left:425px;top:901px;width:23.399999999999977px;height:1px;background:#4d6985"></div>
<div class="a" style="left:479.4px;top:901px;width:62.0px;height:1px;background:#4d6985"></div>
<div class="a" style="left:572.4px;top:901px;width:62.0px;height:1px;background:#4d6985"></div>
<div class="a" style="left:665.4px;top:901px;width:62.0px;height:1px;background:#4d6985"></div>
<div class="a" style="left:944.4px;top:901px;width:558.0000000000001px;height:1px;background:#4d6985"></div>
<div class="a" style="left:425px;top:925px;width:302.4px;height:1px;background:#3f5068"></div>
<div class="a" style="left:944.4px;top:925px;width:971.6px;height:1px;background:#3f5068"></div>
<div class="a" style="left:1503.0px;top:890px;width:30px;height:23px;border:1px solid #54738f;background:#363636"></div>
<div class="a" style="left:425px;top:837px;width:1491px;height:125px;background-image:linear-gradient(90deg,#3b3b3b 1px,transparent 1px);background-size:31px 1px;background-position:23px 0"></div>
<div class="a" style="left:425px;top:841px;width:1491px;height:1px;background:#3b3b3b"></div>
<div class="a" style="left:425px;top:865px;width:1491px;height:1px;background:#3b3b3b"></div>
<div class="a" style="left:425px;top:889px;width:1491px;height:1px;background:#3b3b3b"></div>
<div class="a" style="left:425px;top:913px;width:1491px;height:1px;background:#3b3b3b"></div>
<div class="a" style="left:425px;top:937px;width:1491px;height:1px;background:#3b3b3b"></div>
<div class="a" style="left:425px;top:961px;width:1491px;height:1px;background:#3b3b3b"></div>
<div class="a" style="left:425px;top:837px;width:1449.4px;height:4px;background-color:#6c6c6c;background-image:linear-gradient(90deg,#333 1px,transparent 1px);background-size:31px 1px;background-position:23px 0"></div>
<div class="a" style="left:1874.4px;top:837px;width:41.6px;height:4px;background:#333"></div>
<div class="t d" style="left:481.4px;top:824px;font-size:9.500px;letter-spacing:0">27</div>
<div class="t d" style="left:574.4px;top:824px;font-size:9.500px;letter-spacing:0">30</div>
<div class="t d" style="left:667.4px;top:824px;font-size:9.500px;letter-spacing:0">33</div>
<div class="t d" style="left:760.4px;top:824px;font-size:9.500px;letter-spacing:0">36</div>
<div class="t d" style="left:853.4px;top:824px;font-size:9.500px;letter-spacing:0">39</div>
<div class="t d" style="left:946.4px;top:824px;font-size:9.500px;letter-spacing:0">42</div>
<div class="t d" style="left:1039.4px;top:824px;font-size:9.500px;letter-spacing:0">45</div>
<div class="t d" style="left:1132.4px;top:824px;font-size:9.500px;letter-spacing:0">48</div>
<div class="t d" style="left:1225.4px;top:824px;font-size:9.500px;letter-spacing:0">51</div>
<div class="t d" style="left:1318.4px;top:824px;font-size:9.500px;letter-spacing:0">54</div>
<div class="t d" style="left:1411.4px;top:824px;font-size:9.500px;letter-spacing:0">57</div>
<div class="t d" style="left:1504.4px;top:824px;font-size:9.500px;letter-spacing:0">60</div>
<div class="t d" style="left:1597.4px;top:824px;font-size:9.500px;letter-spacing:0">63</div>
<div class="t d" style="left:1690.4px;top:824px;font-size:9.500px;letter-spacing:0">66</div>
<div class="t d" style="left:1783.4px;top:824px;font-size:9.500px;letter-spacing:0">69</div>
<div class="t d" style="left:1876.4px;top:824px;font-size:9.500px;letter-spacing:0">72</div>
<div class="a" style="left:634.9px;top:837px;width:30px;height:4px;background:#e8a040"></div>
<div class="a" style="left:634.9px;top:842px;width:30px;height:23px;background:#9a7a50"></div>
<div class="a" style="left:647.4px;top:851px;width:5px;height:5px;border-radius:50%;background:#e8a040"></div>
<div class="a" style="left:634.9px;top:842px;width:4px;height:23px;background:#e8a040"></div><div class="a" style="left:660.9px;top:842px;width:4px;height:23px;background:#e8a040"></div>
<div class="a" style="left:634.9px;top:866px;width:4px;height:23px;background:#e8a040"></div><div class="a" style="left:660.9px;top:866px;width:4px;height:23px;background:#e8a040"></div>
<div class="a" style="left:634.9px;top:890px;width:4px;height:23px;background:#e8a040"></div><div class="a" style="left:660.9px;top:890px;width:4px;height:23px;background:#e8a040"></div>
<div class="a" style="left:634.9px;top:914px;width:4px;height:23px;background:#e8a040"></div><div class="a" style="left:660.9px;top:914px;width:4px;height:23px;background:#e8a040"></div>
<div class="a" style="left:634.9px;top:938px;width:4px;height:23px;background:#e8a040"></div><div class="a" style="left:660.9px;top:938px;width:4px;height:23px;background:#e8a040"></div>
<div class="a" style="left:250px;top:823px;width:175px;height:150px;background:#494949"></div>
<div class="a" style="left:251px;top:824px;width:174px;height:18px;background:#3d3d3d;border-top:1px solid #353535"></div>
<svg style="left:255px;top:828px" width="12" height="12" viewBox="0 0 12 12"><rect x="0.600" y="0.600" width="10.800" height="10.800" fill="none" stroke="#d2d2d2" stroke-width="1.200"/><rect x="2.500" y="2.500" width="7" height="7" fill="#d2d2d2"/><path d="M6 3.500v5M3.500 6h5" stroke="#3d3d3d" stroke-width="1.200"/></svg>
<svg style="left:273px;top:829px" width="10" height="10" viewBox="0 0 10 10"><path d="M0.500 3.500h2l3-3v9l-3-3h-2z" fill="#d2d2d2"/><path d="M7 3.500l2-1M7 5h2.500M7 6.500l2 1" stroke="#777" stroke-width="0.800"/></svg>
<svg style="left:410px;top:829px" width="10" height="10" viewBox="0 0 10 10"><rect x="0" y="0" width="10" height="10" rx="2" fill="#c8c8c8"/><path d="M1.500 5h7M1.500 5l2-2M1.500 5l2 2M8.500 5l-2-2M8.500 5l-2 2" stroke="#3d3d3d" stroke-width="1.100" fill="none"/></svg>
<div class="a" style="left:251px;top:843px;width:174px;height:23px;background:linear-gradient(#484848,#424242);border-bottom:1px solid #363636"></div>
<div class="a" style="left:251px;top:842px;width:174px;height:2px;background:#54738f"></div><div class="a" style="left:251px;top:863px;width:174px;height:2px;background:#54738f"></div>
<div class="t d" style="left:253px;top:848px">Paint Layer 3</div>
<svg style="left:335px;top:848px" width="15" height="13" viewBox="0 0 16 14"><path d="M0.700 6C2.500 2.500 5 1 8 1s5.500 1.500 7.300 5" fill="none" stroke="#e0e0e0" stroke-width="1.200"/><path d="M0.700 7.500C2.500 11.500 5 13 8 13s5.500-1.500 7.300-5.500" fill="none" stroke="#e0e0e0" stroke-width="1.300"/><path d="M4.300 2.500a3.900 4.200 0 1 0 7.400 0z" fill="#e0e0e0"/><circle cx="8" cy="5" r="3.600" fill="#e0e0e0"/></svg>
<svg style="left:355px;top:847px" width="11" height="13" viewBox="0 0 12 14"><path d="M6 5.500v-2.500a2.800 2.800 0 0 1 5.300 0v1.500" fill="none" stroke="#6a6a6a" stroke-width="1.300"/><rect x="0.500" y="6.500" width="10.500" height="7" fill="#6a6a6a"/></svg>
<div class="t" style="left:369px;top:844px;width:17px;height:20px;line-height:20px;text-align:center;font-size:19px;font-style:italic;color:#6a6a6a">&#945;</div>
<div class="a" style="left:390px;top:847px;width:15px;height:15px;background-color:#505050;background-image:conic-gradient(#6e6e6e 25%,#505050 0 50%,#6e6e6e 0 75%,#505050 0);background-size:10px 10px;background-position:5px 0"></div>
<svg style="left:408px;top:846px" width="15" height="17" viewBox="0 0 15 17"><path d="M7.500 4a3.600 3.600 0 0 1 2 6.500l-0.300 2.500h-3.400l-0.300-2.500a3.600 3.600 0 0 1 2-6.500z" fill="#f0f0f0"/><rect x="6" y="13.500" width="3" height="1.800" fill="#f0f0f0"/><path d="M7.500 0.300v2M2.500 2l1.300 1.500M12.500 2l-1.300 1.500M0.300 6.500h2M12.700 6.500h2M1.500 11l1.500-1M13.500 11l-1.500-1" stroke="#f0f0f0" stroke-width="1"/></svg>
<div class="a" style="left:251px;top:867px;width:174px;height:23px;background:linear-gradient(#484848,#424242);border-bottom:1px solid #363636"></div>
<div class="t d" style="left:253px;top:872px">Paint Layer 4</div>
<svg style="left:335px;top:872px" width="15" height="13" viewBox="0 0 16 14"><path d="M0.700 6C2.500 2.500 5 1 8 1s5.500 1.500 7.300 5" fill="none" stroke="#e0e0e0" stroke-width="1.200"/><path d="M0.700 7.500C2.500 11.500 5 13 8 13s5.500-1.500 7.300-5.500" fill="none" stroke="#e0e0e0" stroke-width="1.300"/><path d="M4.300 2.500a3.900 4.200 0 1 0 7.400 0z" fill="#e0e0e0"/><circle cx="8" cy="5" r="3.600" fill="#e0e0e0"/></svg>
<svg style="left:355px;top:871px" width="11" height="13" viewBox="0 0 12 14"><path d="M6 5.500v-2.500a2.800 2.800 0 0 1 5.300 0v1.500" fill="none" stroke="#6a6a6a" stroke-width="1.300"/><rect x="0.500" y="6.500" width="10.500" height="7" fill="#6a6a6a"/></svg>
<div class="t" style="left:369px;top:868px;width:17px;height:20px;line-height:20px;text-align:center;font-size:19px;font-style:italic;color:#6a6a6a">&#945;</div>
<div class="a" style="left:390px;top:871px;width:15px;height:15px;background-color:#505050;background-image:conic-gradient(#6e6e6e 25%,#505050 0 50%,#6e6e6e 0 75%,#505050 0);background-size:10px 10px;background-position:5px 0"></div>
<svg style="left:411px;top:873px" width="8" height="12" viewBox="0 0 9 13"><path d="M4.500 0a3.800 3.800 0 0 1 2.200 6.900l-0.300 2.600h-3.800l-0.300-2.600a3.800 3.800 0 0 1 2.200-6.900z" fill="#6a6a6a"/><rect x="3" y="10" width="3" height="2.300" fill="#6a6a6a"/></svg>
<div class="a" style="left:251px;top:891px;width:174px;height:23px;background:linear-gradient(#484848,#424242);border-bottom:1px solid #363636"></div>
<div class="t d" style="left:253px;top:896px">Paint Layer 2</div>
<svg style="left:335px;top:896px" width="15" height="13" viewBox="0 0 16 14"><path d="M0.700 6C2.500 2.500 5 1 8 1s5.500 1.500 7.300 5" fill="none" stroke="#e0e0e0" stroke-width="1.200"/><path d="M0.700 7.500C2.500 11.500 5 13 8 13s5.500-1.500 7.300-5.500" fill="none" stroke="#e0e0e0" stroke-width="1.300"/><path d="M4.300 2.500a3.900 4.200 0 1 0 7.400 0z" fill="#e0e0e0"/><circle cx="8" cy="5" r="3.600" fill="#e0e0e0"/></svg>
<svg style="left:355px;top:895px" width="11" height="13" viewBox="0 0 12 14"><path d="M6 5.500v-2.500a2.800 2.800 0 0 1 5.300 0v1.500" fill="none" stroke="#6a6a6a" stroke-width="1.300"/><rect x="0.500" y="6.500" width="10.500" height="7" fill="#6a6a6a"/></svg>
<div class="t" style="left:369px;top:892px;width:17px;height:20px;line-height:20px;text-align:center;font-size:19px;font-style:italic;color:#6a6a6a">&#945;</div>
<div class="a" style="left:390px;top:895px;width:15px;height:15px;background-color:#505050;background-image:conic-gradient(#6e6e6e 25%,#505050 0 50%,#6e6e6e 0 75%,#505050 0);background-size:10px 10px;background-position:5px 0"></div>
<svg style="left:411px;top:897px" width="8" height="12" viewBox="0 0 9 13"><path d="M4.500 0a3.800 3.800 0 0 1 2.200 6.900l-0.300 2.600h-3.800l-0.300-2.600a3.800 3.800 0 0 1 2.200-6.900z" fill="#6a6a6a"/><rect x="3" y="10" width="3" height="2.300" fill="#6a6a6a"/></svg>
<div class="a" style="left:251px;top:915px;width:174px;height:23px;background:linear-gradient(#484848,#424242);border-bottom:1px solid #363636"></div>
<div class="t d" style="left:253px;top:920px">Paint Layer 1</div>
<svg style="left:335px;top:920px" width="15" height="13" viewBox="0 0 16 14"><path d="M0.700 6C2.500 2.500 5 1 8 1s5.500 1.500 7.300 5" fill="none" stroke="#5a5a5a" stroke-width="1.200"/><path d="M0.700 7.500C2.500 11.500 5 13 8 13s5.500-1.500 7.300-5.500" fill="none" stroke="#5a5a5a" stroke-width="1.300"/></svg>
<svg style="left:355px;top:919px" width="11" height="13" viewBox="0 0 12 14"><path d="M6 5.500v-2.500a2.800 2.800 0 0 1 5.300 0v1.500" fill="none" stroke="#6a6a6a" stroke-width="1.300"/><rect x="0.500" y="6.500" width="10.500" height="7" fill="#6a6a6a"/></svg>
<div class="t" style="left:369px;top:916px;width:17px;height:20px;line-height:20px;text-align:center;font-size:19px;font-style:italic;color:#6a6a6a">&#945;</div>
<div class="a" style="left:390px;top:919px;width:15px;height:15px;background-color:#505050;background-image:conic-gradient(#6e6e6e 25%,#505050 0 50%,#6e6e6e 0 75%,#505050 0);background-size:10px 10px;background-position:5px 0"></div>
<svg style="left:411px;top:921px" width="8" height="12" viewBox="0 0 9 13"><path d="M4.500 0a3.800 3.800 0 0 1 2.200 6.900l-0.300 2.600h-3.800l-0.300-2.600a3.800 3.800 0 0 1 2.200-6.900z" fill="#6a6a6a"/><rect x="3" y="10" width="3" height="2.300" fill="#6a6a6a"/></svg>
<div class="a" style="left:251px;top:939px;width:174px;height:23px;background:linear-gradient(#484848,#424242);border-bottom:1px solid #363636"></div>
<div class="t d" style="left:253px;top:944px">Background</div>
<svg style="left:353px;top:944px" width="15" height="13" viewBox="0 0 16 14"><path d="M0.700 6C2.500 2.500 5 1 8 1s5.500 1.500 7.300 5" fill="none" stroke="#e0e0e0" stroke-width="1.200"/><path d="M0.700 7.500C2.500 11.500 5 13 8 13s5.500-1.500 7.300-5.500" fill="none" stroke="#e0e0e0" stroke-width="1.300"/><path d="M4.300 2.500a3.900 4.200 0 1 0 7.400 0z" fill="#e0e0e0"/><circle cx="8" cy="5" r="3.600" fill="#e0e0e0"/></svg>
<svg style="left:373px;top:944px" width="11" height="13" viewBox="0 0 12 14"><path d="M2.500 7v-3a3.500 3.500 0 0 1 7 0v3" fill="none" stroke="#d8d8d8" stroke-width="1.600"/><rect x="0.500" y="6" width="11" height="7.500" fill="#d8d8d8"/></svg>
<div class="t" style="left:387px;top:940px;width:17px;height:20px;line-height:20px;text-align:center;font-size:19px;font-style:italic;color:#6a6a6a">&#945;</div>
<div class="a" style="left:408px;top:943px;width:15px;height:15px;background-color:#505050;background-image:conic-gradient(#6e6e6e 25%,#505050 0 50%,#6e6e6e 0 75%,#505050 0);background-size:10px 10px;background-position:5px 0"></div>
<div class="trough" style="left:251px;top:973px;width:1665px;height:13px;background:#3c3c3c"></div>
<div class="a" style="left:251px;top:986px;width:1665px;height:1px;background:#3a3a3a"></div>
<div class="sbtn" style="left:251px;top:973px;width:13px;height:13px"><svg style="left:3px;top:2px" width="5" height="8"><path d="M4.500 0v8l-4.500-4z" fill="#9a9a9a"/></svg></div>
<div class="a" style="left:775px;top:973px;width:970px;height:13px;border:1px solid #585858;background:#424242;box-shadow:-1px 0 0 0 #363636,1px 0 0 0 #363636"></div>
<div class="sbtn" style="left:1902px;top:973px;width:13px;height:13px"><svg style="left:4px;top:2px" width="5" height="8"><path d="M0 0v8l4.500-4z" fill="#9a9a9a"/></svg></div>
<!-- STATUS BAR -->
<div class="a" style="left:3px;top:993px;width:16px;height:16px;border:1px solid #bdbdbd"></div>
<div class="a" style="left:6px;top:996px;width:10px;height:10px;border-radius:50%;border:1.400px dotted #d0d0d0"></div>
<div class="t" style="left:32px;top:995px;letter-spacing:-0.300px">b) Basic-5 Size</div>
<div class="t" style="left:478px;top:995px;letter-spacing:-0.150px">RGB/Alpha (8-bit integer/channel)&nbsp; sRGB-elle-V2-srgbtrc.icc</div>
<div class="a" style="left:1370px;top:991px;width:120px;height:21px;border:1px solid #3c3c3c;box-shadow:inset 0 0 0 1px #545454"></div>
<div class="t" style="left:1380px;top:995px;letter-spacing:-0.150px"><u>5</u>00 x 500 (51.0 MiB)</div>
<div class="a" style="left:1603px;top:992px;width:19px;height:19px;border-radius:50%;background:#2e2e2e"></div>
<svg style="left:1607px;top:998px" width="12" height="7" viewBox="0 0 12 7"><path d="M0 3.500h12M0 3.500l2.500-2M0 3.500l2.500 2" stroke="#e0e0e0" stroke-width="1" fill="none"/><circle cx="11" cy="3.500" r="1" fill="#e0e0e0"/></svg>
<div class="t" style="left:1652px;top:995px">0.00&#176;</div>
<div class="t" style="left:1762px;top:995px">100%</div>
<div class="a" style="left:1809px;top:1000px;width:80px;height:4px;border-radius:2px;background:#3a3a3a"></div>
<div class="a" style="left:1809px;top:1000px;width:20px;height:4px;border-radius:2px;background:#5d82a6"></div>
<div class="a" style="left:1827px;top:995px;width:13px;height:13px;border:1px solid #363636;border-radius:3px;background:linear-gradient(#5a5a5a,#4a4a4a);box-shadow:inset 0 0 0 1px #6a6a6a"></div>
<div class="btn" style="left:1892px;top:990px;width:22px;height:23px;border-radius:3px"></div>
<div class="a" style="left:1897px;top:994px;width:12px;height:14px;background:#eef2fb"></div>
<svg style="left:1897px;top:994px" width="12" height="14" viewBox="0 0 12 14"><path d="M1.500 2.500h2v2h-2zM8.500 2.500h2v2h-2zM1.500 9.500h2v2h-2zM8.500 9.500h2v2h-2z" fill="#4a8ae0"/><circle cx="6" cy="7" r="3.300" fill="#4a8ae0"/><circle cx="6" cy="7" r="4" fill="none" stroke="#f0d020" stroke-width="1.300" stroke-dasharray="1.600 1"/></svg>
<div class="a" style="left:0;top:1015px;width:1916px;height:4px;background:#181818"></div>
<div class="a" style="left:1862px;top:1015px;width:42px;height:4px;background:#2b2b2b"></div>
<div class="a" style="left:1911px;top:1015px;width:1px;height:4px;background:#a8a8a8"></div>
<div class="a" style="left:340px;top:1015px;width:48px;height:4px;background:#c06a1e"></div>
<div class="a" style="left:388px;top:1015px;width:49px;height:4px;background:#4a4a4a"></div>
</body>
</html>
